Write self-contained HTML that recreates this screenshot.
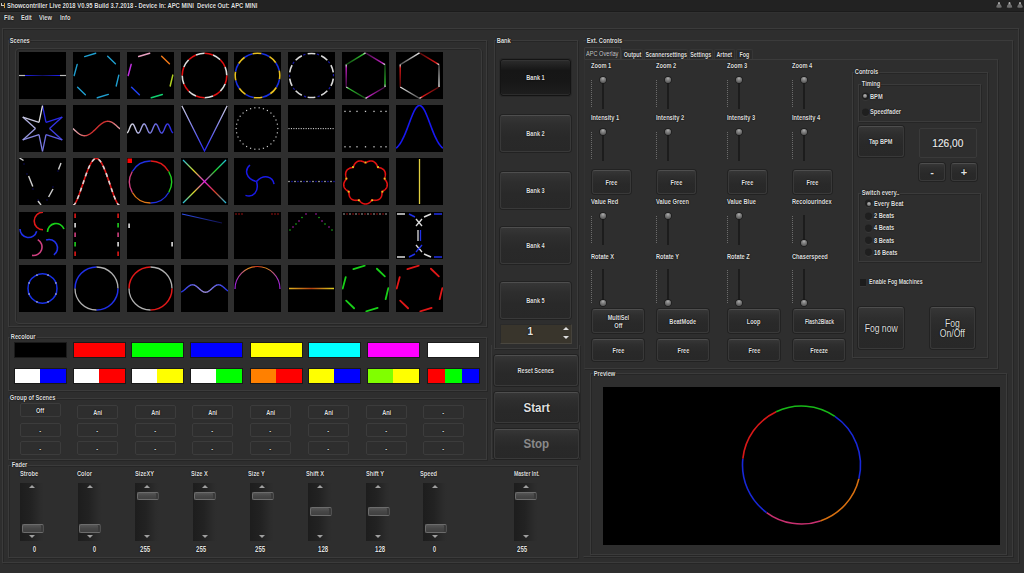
<!DOCTYPE html><html><head><meta charset="utf-8"><style>
*{margin:0;padding:0;box-sizing:border-box}
html,body{width:1024px;height:573px;overflow:hidden;background:#2e2e2e;font-family:"Liberation Sans",sans-serif;color:#e6e6e6}
.a{position:absolute}
.t{position:absolute;font-size:7.5px;font-weight:bold;line-height:8px;white-space:nowrap;color:#e0e0e0;transform:scaleX(0.76);transform-origin:0 0;text-shadow:0 0 1.5px #000,0 0 1px #000}
.bl{display:inline-block;transform:scaleX(0.8);white-space:nowrap}
.tc{position:absolute;font-size:7px;font-weight:bold;line-height:8px;white-space:nowrap;color:#e0e0e0;text-align:center;text-shadow:0 0 1.5px #000,0 0 1px #000}
.gl{background:#2e2e2e;padding:0 1px}
.grp{position:absolute;border:1px solid #3b3b3b;box-shadow:inset 1px 1px 0 #262626,1px 1px 0 #262626}
.th{position:absolute;width:47px;height:47px;background:#000}
.btn{position:absolute;border-radius:3px;background:linear-gradient(#363636,#2e2e2e 25%,#292929 60%,#282828);border:1px solid #393939;border-top-color:#4e4e4e;box-shadow:0 0 0 1px #222;padding-top:1px;font-size:7px;font-weight:bold;color:#e0e0e0;display:flex;align-items:center;justify-content:center;text-align:center;line-height:8px;text-shadow:0 0 1.5px #000,0 0 1px #000}
.gb{position:absolute;border-radius:2px;border:1px solid #3c3c3c;font-size:7px;font-weight:bold;color:#e0e0e0;display:flex;align-items:center;justify-content:center;text-shadow:0 0 1.5px #000,0 0 1px #000}
.sw{position:absolute;height:16px;border:1px solid #1a1a1a}
</style></head><body><div class="a" style="left:0px;top:0px;width:1024px;height:11px;background:#222"></div>
<div class="a" style="left:0;top:11px;width:1024px;height:1px;background:#1b1b1b"></div>
<div class="a" style="left:1px;top:3px;width:3px;height:3px;border-left:1px solid #c8c8c8;border-bottom:1px solid #c8c8c8"></div><div class="a" style="left:4px;top:2.5px;width:1px;height:5px;background:#d89a30"></div>
<svg class="a" style="left:0;top:0" width="1024" height="12"><path d="M995.8,7.2 C995.8,5 997.4,4.5 997.8,3.2 C998,1.6 1000,1.6 1000.2,3.2 C1000.6,4.5 1002.2,5 1002.2,7.2 C1002.2,8.6 995.8,8.6 995.8,7.2Z" fill="#6e6e6e" stroke="#161616" stroke-width="0.8"/><ellipse cx="999" cy="3.2" rx="0.9" ry="1.1" fill="#b0b0b0"/><path d="M1006.3,7.2 C1006.3,5 1007.9,4.5 1008.3,3.2 C1008.5,1.6 1010.5,1.6 1010.7,3.2 C1011.1,4.5 1012.7,5 1012.7,7.2 C1012.7,8.6 1006.3,8.6 1006.3,7.2Z" fill="#6e6e6e" stroke="#161616" stroke-width="0.8"/><ellipse cx="1009.5" cy="3.2" rx="0.9" ry="1.1" fill="#b0b0b0"/><path d="M1016.8,7.2 C1016.8,5 1018.4,4.5 1018.8,3.2 C1019,1.6 1021,1.6 1021.2,3.2 C1021.6,4.5 1023.2,5 1023.2,7.2 C1023.2,8.6 1016.8,8.6 1016.8,7.2Z" fill="#6e6e6e" stroke="#161616" stroke-width="0.8"/><ellipse cx="1020" cy="3.2" rx="0.9" ry="1.1" fill="#b0b0b0"/></svg>
<div class="a" style="left:0px;top:12px;width:1024px;height:16px;background:#2d2d2d;border-top:1px solid #313131"></div>
<div class="grp" style="left:2px;top:28px;width:1017px;height:535px;"></div>
<div class="grp" style="left:8px;top:40px;width:479px;height:287px;"></div>
<div class="grp" style="left:15px;top:48px;width:467px;height:276px;border-radius:4px"></div>
<svg class="th" style="left:19.0px;top:52px" width="47" height="47" viewBox="0 0 47 47"><line x1="0" y1="23.5" x2="6" y2="23.5" stroke="#bbb" stroke-width="1.2" /><line x1="41" y1="23.5" x2="47" y2="23.5" stroke="#bbb" stroke-width="1.2" /><line x1="6" y1="23.5" x2="41" y2="23.5" stroke="url(#gblue)" stroke-width="1.2"/></svg>
<svg class="th" style="left:72.9px;top:52px" width="47" height="47" viewBox="0 0 47 47"><line x1="11.68" y1="4.59" x2="22.72" y2="1.21" stroke="#1f9fd0" stroke-width="1.4" stroke-linecap="round"/><line x1="34.65" y1="4.19" x2="42.41" y2="11.68" stroke="#1f9fd0" stroke-width="1.4" stroke-linecap="round"/><line x1="45.80" y1="23.11" x2="43.19" y2="33.97" stroke="#1f9fd0" stroke-width="1.4" stroke-linecap="round"/><line x1="35.32" y1="42.41" x2="24.28" y2="45.79" stroke="#1f9fd0" stroke-width="1.4" stroke-linecap="round"/><line x1="12.35" y1="42.81" x2="4.59" y2="35.32" stroke="#1f9fd0" stroke-width="1.4" stroke-linecap="round"/><line x1="1.20" y1="23.50" x2="4.19" y2="12.35" stroke="#1f9fd0" stroke-width="1.4" stroke-linecap="round"/></svg>
<svg class="th" style="left:126.7px;top:52px" width="47" height="47" viewBox="0 0 47 47"><line x1="11.68" y1="4.59" x2="22.72" y2="1.21" stroke="#e8a0c0" stroke-width="1.5" stroke-linecap="round"/><line x1="34.65" y1="4.19" x2="42.41" y2="11.68" stroke="#f07818" stroke-width="1.5" stroke-linecap="round"/><line x1="45.80" y1="23.11" x2="43.19" y2="33.97" stroke="#b0d020" stroke-width="1.5" stroke-linecap="round"/><line x1="35.32" y1="42.41" x2="24.28" y2="45.79" stroke="#10d070" stroke-width="1.5" stroke-linecap="round"/><line x1="12.35" y1="42.81" x2="4.59" y2="35.32" stroke="#2040f0" stroke-width="1.5" stroke-linecap="round"/><line x1="1.20" y1="23.50" x2="4.19" y2="12.35" stroke="#c030e0" stroke-width="1.5" stroke-linecap="round"/></svg>
<svg class="th" style="left:180.6px;top:52px" width="47" height="47" viewBox="0 0 47 47"><path d="M23.50,1.20 A22.3,22.3 0 0 1 32.03,2.90" stroke="#e01010" stroke-width="1.6" fill="none" /><path d="M32.03,2.90 A22.3,22.3 0 0 1 39.27,7.73" stroke="#dddddd" stroke-width="1.6" fill="none" /><path d="M39.27,7.73 A22.3,22.3 0 0 1 44.10,14.97" stroke="#e01010" stroke-width="1.6" fill="none" /><path d="M44.10,14.97 A22.3,22.3 0 0 1 45.80,23.50" stroke="#dddddd" stroke-width="1.6" fill="none" /><path d="M45.80,23.50 A22.3,22.3 0 0 1 44.10,32.03" stroke="#e01010" stroke-width="1.6" fill="none" /><path d="M44.10,32.03 A22.3,22.3 0 0 1 39.27,39.27" stroke="#dddddd" stroke-width="1.6" fill="none" /><path d="M39.27,39.27 A22.3,22.3 0 0 1 32.03,44.10" stroke="#e01010" stroke-width="1.6" fill="none" /><path d="M32.03,44.10 A22.3,22.3 0 0 1 23.50,45.80" stroke="#dddddd" stroke-width="1.6" fill="none" /><path d="M23.50,45.80 A22.3,22.3 0 0 1 14.97,44.10" stroke="#e01010" stroke-width="1.6" fill="none" /><path d="M14.97,44.10 A22.3,22.3 0 0 1 7.73,39.27" stroke="#dddddd" stroke-width="1.6" fill="none" /><path d="M7.73,39.27 A22.3,22.3 0 0 1 2.90,32.03" stroke="#e01010" stroke-width="1.6" fill="none" /><path d="M2.90,32.03 A22.3,22.3 0 0 1 1.20,23.50" stroke="#dddddd" stroke-width="1.6" fill="none" /><path d="M1.20,23.50 A22.3,22.3 0 0 1 2.90,14.97" stroke="#e01010" stroke-width="1.6" fill="none" /><path d="M2.90,14.97 A22.3,22.3 0 0 1 7.73,7.73" stroke="#dddddd" stroke-width="1.6" fill="none" /><path d="M7.73,7.73 A22.3,22.3 0 0 1 14.97,2.90" stroke="#e01010" stroke-width="1.6" fill="none" /><path d="M14.97,2.90 A22.3,22.3 0 0 1 23.50,1.20" stroke="#dddddd" stroke-width="1.6" fill="none" /></svg>
<svg class="th" style="left:234.4px;top:52px" width="47" height="47" viewBox="0 0 47 47"><path d="M27.37,1.54 A22.3,22.3 0 0 1 35.48,4.69" stroke="#1830e0" stroke-width="1.6" fill="none" /><path d="M35.48,4.69 A22.3,22.3 0 0 1 41.77,10.71" stroke="#e8c020" stroke-width="1.6" fill="none" /><path d="M41.77,10.71 A22.3,22.3 0 0 1 45.27,18.67" stroke="#1830e0" stroke-width="1.6" fill="none" /><path d="M45.27,18.67 A22.3,22.3 0 0 1 45.46,27.37" stroke="#e8c020" stroke-width="1.6" fill="none" /><path d="M45.46,27.37 A22.3,22.3 0 0 1 42.31,35.48" stroke="#1830e0" stroke-width="1.6" fill="none" /><path d="M42.31,35.48 A22.3,22.3 0 0 1 36.29,41.77" stroke="#e8c020" stroke-width="1.6" fill="none" /><path d="M36.29,41.77 A22.3,22.3 0 0 1 28.33,45.27" stroke="#1830e0" stroke-width="1.6" fill="none" /><path d="M28.33,45.27 A22.3,22.3 0 0 1 19.63,45.46" stroke="#e8c020" stroke-width="1.6" fill="none" /><path d="M19.63,45.46 A22.3,22.3 0 0 1 11.52,42.31" stroke="#1830e0" stroke-width="1.6" fill="none" /><path d="M11.52,42.31 A22.3,22.3 0 0 1 5.23,36.29" stroke="#e8c020" stroke-width="1.6" fill="none" /><path d="M5.23,36.29 A22.3,22.3 0 0 1 1.73,28.33" stroke="#1830e0" stroke-width="1.6" fill="none" /><path d="M1.73,28.33 A22.3,22.3 0 0 1 1.54,19.63" stroke="#e8c020" stroke-width="1.6" fill="none" /><path d="M1.54,19.63 A22.3,22.3 0 0 1 4.69,11.52" stroke="#1830e0" stroke-width="1.6" fill="none" /><path d="M4.69,11.52 A22.3,22.3 0 0 1 10.71,5.23" stroke="#e8c020" stroke-width="1.6" fill="none" /><path d="M10.71,5.23 A22.3,22.3 0 0 1 18.67,1.73" stroke="#1830e0" stroke-width="1.6" fill="none" /><path d="M18.67,1.73 A22.3,22.3 0 0 1 27.37,1.54" stroke="#e8c020" stroke-width="1.6" fill="none" /></svg>
<svg class="th" style="left:288.3px;top:52px" width="47" height="47" viewBox="0 0 47 47"><path d="M19.68,1.83 A22,22 0 0 1 27.32,1.83" stroke="#d8d8d8" stroke-width="1.6" fill="none" /><path d="M33.14,3.73 A22,22 0 0 1 39.33,8.22" stroke="#d8d8d8" stroke-width="1.6" fill="none" /><path d="M42.92,13.17 A22,22 0 0 1 45.29,20.44" stroke="#d8d8d8" stroke-width="1.6" fill="none" /><path d="M45.29,26.56 A22,22 0 0 1 42.92,33.83" stroke="#d8d8d8" stroke-width="1.6" fill="none" /><path d="M39.33,38.78 A22,22 0 0 1 33.14,43.27" stroke="#d8d8d8" stroke-width="1.6" fill="none" /><path d="M27.32,45.17 A22,22 0 0 1 19.68,45.17" stroke="#d8d8d8" stroke-width="1.6" fill="none" /><path d="M13.86,43.27 A22,22 0 0 1 7.67,38.78" stroke="#d8d8d8" stroke-width="1.6" fill="none" /><path d="M4.08,33.83 A22,22 0 0 1 1.71,26.56" stroke="#d8d8d8" stroke-width="1.6" fill="none" /><path d="M1.71,20.44 A22,22 0 0 1 4.08,13.17" stroke="#d8d8d8" stroke-width="1.6" fill="none" /><path d="M7.67,8.22 A22,22 0 0 1 13.86,3.73" stroke="#d8d8d8" stroke-width="1.6" fill="none" /><path d="M28.82,2.15 A22,22 0 0 1 31.02,2.83" stroke="#1818a0" stroke-width="1.2" fill="none" /><path d="M40.35,9.36 A22,22 0 0 1 41.74,11.20" stroke="#1818a0" stroke-width="1.2" fill="none" /><path d="M45.45,21.97 A22,22 0 0 1 45.49,24.27" stroke="#1818a0" stroke-width="1.2" fill="none" /><path d="M42.16,35.16 A22,22 0 0 1 40.84,37.04" stroke="#1818a0" stroke-width="1.2" fill="none" /><path d="M31.74,43.90 A22,22 0 0 1 29.56,44.65" stroke="#1818a0" stroke-width="1.2" fill="none" /><path d="M18.18,44.85 A22,22 0 0 1 15.98,44.17" stroke="#1818a0" stroke-width="1.2" fill="none" /><path d="M6.65,37.64 A22,22 0 0 1 5.26,35.80" stroke="#1818a0" stroke-width="1.2" fill="none" /><path d="M1.55,25.03 A22,22 0 0 1 1.51,22.73" stroke="#1818a0" stroke-width="1.2" fill="none" /><path d="M4.84,11.84 A22,22 0 0 1 6.16,9.96" stroke="#1818a0" stroke-width="1.2" fill="none" /><path d="M15.26,3.10 A22,22 0 0 1 17.44,2.35" stroke="#1818a0" stroke-width="1.2" fill="none" /></svg>
<svg class="th" style="left:342.2px;top:52px" width="47" height="47" viewBox="0 0 47 47"><line x1="23.5" y1="0.9" x2="43" y2="12.6" stroke="url(#hxa0)" stroke-width="1.4"/><line x1="43" y1="12.6" x2="43" y2="35" stroke="url(#hxa1)" stroke-width="1.4"/><line x1="43" y1="35" x2="23.5" y2="46.3" stroke="url(#hxa2)" stroke-width="1.4"/><line x1="23.5" y1="46.3" x2="4.2" y2="35" stroke="url(#hxa3)" stroke-width="1.4"/><line x1="4.2" y1="35" x2="4.2" y2="12.6" stroke="url(#hxa4)" stroke-width="1.4"/><line x1="4.2" y1="12.6" x2="23.5" y2="0.9" stroke="url(#hxa5)" stroke-width="1.4"/></svg>
<svg class="th" style="left:396.0px;top:52px" width="47" height="47" viewBox="0 0 47 47"><line x1="23.5" y1="0.9" x2="43" y2="12.6" stroke="url(#hxb0)" stroke-width="1.4"/><line x1="43" y1="12.6" x2="43" y2="35" stroke="url(#hxb1)" stroke-width="1.4"/><line x1="43" y1="35" x2="23.5" y2="46.3" stroke="url(#hxb2)" stroke-width="1.4"/><line x1="23.5" y1="46.3" x2="4.2" y2="35" stroke="url(#hxb3)" stroke-width="1.4"/><line x1="4.2" y1="35" x2="4.2" y2="12.6" stroke="url(#hxb4)" stroke-width="1.4"/><line x1="4.2" y1="12.6" x2="23.5" y2="0.9" stroke="url(#hxb5)" stroke-width="1.4"/></svg>
<svg class="th" style="left:19.0px;top:105px" width="47" height="47" viewBox="0 0 47 47"><line x1="23.50" y1="0.70" x2="27.00" y2="17.44" stroke="#2828e8" stroke-width="1.3" /><line x1="27.00" y1="17.44" x2="43.25" y2="12.10" stroke="#2828e8" stroke-width="1.3" /><line x1="43.25" y1="12.10" x2="30.50" y2="23.50" stroke="#3434e8" stroke-width="1.3" /><line x1="30.50" y1="23.50" x2="43.25" y2="34.90" stroke="#4040e8" stroke-width="1.3" /><line x1="43.25" y1="34.90" x2="27.00" y2="29.56" stroke="#5c5ce0" stroke-width="1.3" /><line x1="27.00" y1="29.56" x2="23.50" y2="46.30" stroke="#7070e0" stroke-width="1.3" /><line x1="23.50" y1="46.30" x2="20.00" y2="29.56" stroke="#8080e0" stroke-width="1.3" /><line x1="20.00" y1="29.56" x2="3.75" y2="34.90" stroke="#8888e0" stroke-width="1.3" /><line x1="3.75" y1="34.90" x2="16.50" y2="23.50" stroke="#9898e0" stroke-width="1.3" /><line x1="16.50" y1="23.50" x2="3.75" y2="12.10" stroke="#b0b0e0" stroke-width="1.3" /><line x1="3.75" y1="12.10" x2="20.00" y2="17.44" stroke="#c8c8e0" stroke-width="1.3" /><line x1="20.00" y1="17.44" x2="23.50" y2="0.70" stroke="#e0e0e0" stroke-width="1.3" /></svg>
<svg class="th" style="left:72.9px;top:105px" width="47" height="47" viewBox="0 0 47 47"><polyline points="0.00,23.50 0.50,23.99 1.00,24.47 1.50,24.95 2.00,25.43 2.50,25.89 3.00,26.35 3.50,26.79 4.00,27.21 4.50,27.62 5.00,28.01 5.50,28.38 6.00,28.73 6.50,29.05 7.00,29.35 7.50,29.62 8.00,29.86 8.50,30.07 9.00,30.26 9.50,30.41 10.00,30.53 10.50,30.62 11.00,30.68 11.50,30.70 12.00,30.69 12.50,30.65 13.00,30.57 13.50,30.46 14.00,30.32 14.50,30.15 15.00,29.95 15.50,29.72 16.00,29.46 16.50,29.17 17.00,28.86 17.50,28.52 18.00,28.16 18.50,27.78 19.00,27.38 19.50,26.96 20.00,26.52 20.50,26.07 21.00,25.61 21.50,25.14 22.00,24.66 22.50,24.18 23.00,23.69 23.50,23.21 24.00,22.72 24.50,22.24 25.00,21.76 25.50,21.29 26.00,20.84 26.50,20.39 27.00,19.96 27.50,19.54 28.00,19.14 28.50,18.76 29.00,18.41 29.50,18.08 30.00,17.77 30.50,17.49 31.00,17.23 31.50,17.01 32.00,16.81 32.50,16.65 33.00,16.51 33.50,16.41 34.00,16.34 34.50,16.31 35.00,16.30 35.50,16.33 36.00,16.39 36.50,16.49 37.00,16.62 37.50,16.78 38.00,16.97 38.50,17.18 39.00,17.43 39.50,17.71 40.00,18.01 40.50,18.34 41.00,18.69 41.50,19.07 42.00,19.46 42.50,19.87 43.00,20.30 43.50,20.74 44.00,21.20 44.50,21.67 45.00,22.14 45.50,22.62 46.00,23.11 46.50,23.60 47.00,24.08" stroke="url(#gred)" stroke-width="1.4" fill="none"/></svg>
<svg class="th" style="left:126.7px;top:105px" width="47" height="47" viewBox="0 0 47 47"><polyline points="0.00,27.98 0.50,27.54 1.00,26.82 1.50,25.85 2.00,24.72 2.50,23.50 3.00,22.28 3.50,21.15 4.00,20.18 4.50,19.46 5.00,19.02 5.50,18.90 6.00,19.12 6.50,19.65 7.00,20.45 7.50,21.47 8.00,22.64 8.50,23.87 9.00,25.07 9.50,26.16 10.00,27.06 10.50,27.71 11.00,28.05 11.50,28.07 12.00,27.76 12.50,27.14 13.00,26.26 13.50,25.19 14.00,23.99 14.50,22.76 15.00,21.58 15.50,20.54 16.00,19.71 16.50,19.16 17.00,18.91 17.50,18.99 18.00,19.40 18.50,20.10 19.00,21.04 19.50,22.16 20.00,23.38 20.50,24.60 21.00,25.75 21.50,26.73 22.00,27.48 22.50,27.95 23.00,28.10 23.50,27.92 24.00,27.42 24.50,26.64 25.00,25.64 25.50,24.48 26.00,23.25 26.50,22.04 27.00,20.94 27.50,20.02 28.00,19.34 28.50,18.97 29.00,18.92 29.50,19.20 30.00,19.79 30.50,20.64 31.00,21.70 31.50,22.88 32.00,24.12 32.50,25.30 33.00,26.36 33.50,27.21 34.00,27.80 34.50,28.08 35.00,28.03 35.50,27.66 36.00,26.98 36.50,26.06 37.00,24.96 37.50,23.75 38.00,22.52 38.50,21.36 39.00,20.36 39.50,19.58 40.00,19.08 40.50,18.90 41.00,19.05 41.50,19.52 42.00,20.27 42.50,21.25 43.00,22.40 43.50,23.62 44.00,24.84 44.50,25.96 45.00,26.90 45.50,27.60 46.00,28.01" stroke="url(#gwb)" stroke-width="1.4" fill="none"/></svg>
<svg class="th" style="left:180.6px;top:105px" width="47" height="47" viewBox="0 0 47 47"><polyline points="0.8,0.8 23.5,46 46.2,0.8" stroke="url(#gv)" stroke-width="1.3" fill="none"/></svg>
<svg class="th" style="left:234.4px;top:105px" width="47" height="47" viewBox="0 0 47 47"><rect x="43.20" y="22.90" width="1.2" height="1.2" fill="#c4c4c4"/><rect x="42.75" y="27.22" width="1.2" height="1.2" fill="#c4c4c4"/><rect x="41.40" y="31.36" width="1.2" height="1.2" fill="#c4c4c4"/><rect x="39.23" y="35.13" width="1.2" height="1.2" fill="#c4c4c4"/><rect x="36.32" y="38.36" width="1.2" height="1.2" fill="#c4c4c4"/><rect x="32.80" y="40.91" width="1.2" height="1.2" fill="#c4c4c4"/><rect x="28.83" y="42.68" width="1.2" height="1.2" fill="#c4c4c4"/><rect x="24.57" y="43.59" width="1.2" height="1.2" fill="#c4c4c4"/><rect x="20.23" y="43.59" width="1.2" height="1.2" fill="#c4c4c4"/><rect x="15.97" y="42.68" width="1.2" height="1.2" fill="#c4c4c4"/><rect x="12.00" y="40.91" width="1.2" height="1.2" fill="#c4c4c4"/><rect x="8.48" y="38.36" width="1.2" height="1.2" fill="#c4c4c4"/><rect x="5.57" y="35.13" width="1.2" height="1.2" fill="#c4c4c4"/><rect x="3.40" y="31.36" width="1.2" height="1.2" fill="#c4c4c4"/><rect x="2.05" y="27.22" width="1.2" height="1.2" fill="#c4c4c4"/><rect x="1.60" y="22.90" width="1.2" height="1.2" fill="#c4c4c4"/><rect x="2.05" y="18.58" width="1.2" height="1.2" fill="#c4c4c4"/><rect x="3.40" y="14.44" width="1.2" height="1.2" fill="#c4c4c4"/><rect x="5.57" y="10.67" width="1.2" height="1.2" fill="#c4c4c4"/><rect x="8.48" y="7.44" width="1.2" height="1.2" fill="#c4c4c4"/><rect x="12.00" y="4.89" width="1.2" height="1.2" fill="#c4c4c4"/><rect x="15.97" y="3.12" width="1.2" height="1.2" fill="#c4c4c4"/><rect x="20.23" y="2.21" width="1.2" height="1.2" fill="#c4c4c4"/><rect x="24.57" y="2.21" width="1.2" height="1.2" fill="#c4c4c4"/><rect x="28.83" y="3.12" width="1.2" height="1.2" fill="#c4c4c4"/><rect x="32.80" y="4.89" width="1.2" height="1.2" fill="#c4c4c4"/><rect x="36.32" y="7.44" width="1.2" height="1.2" fill="#c4c4c4"/><rect x="39.23" y="10.67" width="1.2" height="1.2" fill="#c4c4c4"/><rect x="41.40" y="14.44" width="1.2" height="1.2" fill="#c4c4c4"/><rect x="42.75" y="18.58" width="1.2" height="1.2" fill="#c4c4c4"/></svg>
<svg class="th" style="left:288.3px;top:105px" width="47" height="47" viewBox="0 0 47 47"><rect x="0.45" y="23.05" width="1.1" height="1.1" fill="#d0d0d0"/><rect x="2.90" y="23.05" width="1.1" height="1.1" fill="#d0d0d0"/><rect x="5.35" y="23.05" width="1.1" height="1.1" fill="#d0d0d0"/><rect x="7.80" y="23.05" width="1.1" height="1.1" fill="#d0d0d0"/><rect x="10.25" y="23.05" width="1.1" height="1.1" fill="#d0d0d0"/><rect x="12.70" y="23.05" width="1.1" height="1.1" fill="#d0d0d0"/><rect x="15.15" y="23.05" width="1.1" height="1.1" fill="#d0d0d0"/><rect x="17.60" y="23.05" width="1.1" height="1.1" fill="#d0d0d0"/><rect x="20.05" y="23.05" width="1.1" height="1.1" fill="#d0d0d0"/><rect x="22.50" y="23.05" width="1.1" height="1.1" fill="#d0d0d0"/><rect x="24.95" y="23.05" width="1.1" height="1.1" fill="#d0d0d0"/><rect x="27.40" y="23.05" width="1.1" height="1.1" fill="#d0d0d0"/><rect x="29.85" y="23.05" width="1.1" height="1.1" fill="#d0d0d0"/><rect x="32.30" y="23.05" width="1.1" height="1.1" fill="#d0d0d0"/><rect x="34.75" y="23.05" width="1.1" height="1.1" fill="#d0d0d0"/><rect x="37.20" y="23.05" width="1.1" height="1.1" fill="#d0d0d0"/><rect x="39.65" y="23.05" width="1.1" height="1.1" fill="#d0d0d0"/><rect x="42.10" y="23.05" width="1.1" height="1.1" fill="#d0d0d0"/><rect x="44.55" y="23.05" width="1.1" height="1.1" fill="#d0d0d0"/></svg>
<svg class="th" style="left:342.2px;top:105px" width="47" height="47" viewBox="0 0 47 47"><rect x="2.35" y="5.75" width="1.3" height="1.3" fill="#d0d0d0"/><rect x="2.35" y="41.15" width="1.3" height="1.3" fill="#d0d0d0"/><rect x="7.35" y="5.75" width="1.3" height="1.3" fill="#d0d0d0"/><rect x="7.35" y="41.15" width="1.3" height="1.3" fill="#d0d0d0"/><rect x="14.35" y="5.75" width="1.3" height="1.3" fill="#d0d0d0"/><rect x="14.35" y="41.15" width="1.3" height="1.3" fill="#d0d0d0"/><rect x="22.85" y="5.75" width="1.3" height="1.3" fill="#d0d0d0"/><rect x="22.85" y="41.15" width="1.3" height="1.3" fill="#d0d0d0"/><rect x="31.35" y="5.75" width="1.3" height="1.3" fill="#d0d0d0"/><rect x="31.35" y="41.15" width="1.3" height="1.3" fill="#d0d0d0"/><rect x="38.35" y="5.75" width="1.3" height="1.3" fill="#d0d0d0"/><rect x="38.35" y="41.15" width="1.3" height="1.3" fill="#d0d0d0"/><rect x="43.35" y="5.75" width="1.3" height="1.3" fill="#d0d0d0"/><rect x="43.35" y="41.15" width="1.3" height="1.3" fill="#d0d0d0"/></svg>
<svg class="th" style="left:396.0px;top:105px" width="47" height="47" viewBox="0 0 47 47"><polyline points="0.00,43.20 0.50,42.78 1.00,42.32 1.50,41.82 2.00,41.29 2.50,40.71 3.00,40.09 3.50,39.42 4.00,38.71 4.50,37.95 5.00,37.15 5.50,36.30 6.00,35.41 6.50,34.46 7.00,33.47 7.50,32.44 8.00,31.36 8.50,30.24 9.00,29.08 9.50,27.88 10.00,26.65 10.50,25.39 11.00,24.11 11.50,22.80 12.00,21.47 12.50,20.14 13.00,18.80 13.50,17.45 14.00,16.12 14.50,14.80 15.00,13.49 15.50,12.21 16.00,10.97 16.50,9.77 17.00,8.61 17.50,7.50 18.00,6.46 18.50,5.48 19.00,4.58 19.50,3.75 20.00,3.01 20.50,2.36 21.00,1.80 21.50,1.34 22.00,0.97 22.50,0.71 23.00,0.55 23.50,0.50 24.00,0.55 24.50,0.71 25.00,0.97 25.50,1.34 26.00,1.80 26.50,2.36 27.00,3.01 27.50,3.75 28.00,4.58 28.50,5.48 29.00,6.46 29.50,7.50 30.00,8.61 30.50,9.77 31.00,10.97 31.50,12.21 32.00,13.49 32.50,14.80 33.00,16.12 33.50,17.45 34.00,18.80 34.50,20.14 35.00,21.47 35.50,22.80 36.00,24.11 36.50,25.39 37.00,26.65 37.50,27.88 38.00,29.08 38.50,30.24 39.00,31.36 39.50,32.44 40.00,33.47 40.50,34.46 41.00,35.41 41.50,36.30 42.00,37.15 42.50,37.95 43.00,38.71 43.50,39.42 44.00,40.09 44.50,40.71 45.00,41.29 45.50,41.82 46.00,42.32 46.50,42.78 47.00,43.20" stroke="#1818f0" stroke-width="1.6" fill="none"/></svg>
<svg class="th" style="left:19.0px;top:158px" width="47" height="47" viewBox="0 0 47 47"><line x1="0.5" y1="0" x2="4.5" y2="2.5" stroke="#d0d0d0" stroke-width="1.4" /><line x1="9.6" y1="18" x2="13.8" y2="28.6" stroke="#d0d0d0" stroke-width="1.4" /><line x1="19" y1="43" x2="22" y2="47" stroke="#d0d0d0" stroke-width="1.4" /><line x1="42" y1="5" x2="39.5" y2="11.5" stroke="#d0d0d0" stroke-width="1.4" /><line x1="34" y1="31" x2="29.6" y2="39" stroke="#d0d0d0" stroke-width="1.4" /><rect x="4.50" y="5.50" width="1" height="1" fill="#1010a0"/><rect x="7.50" y="15.50" width="1" height="1" fill="#1010a0"/><rect x="13.50" y="30.50" width="1" height="1" fill="#1010a0"/><rect x="18.50" y="41.50" width="1" height="1" fill="#1010a0"/><rect x="38.50" y="12.50" width="1" height="1" fill="#1010a0"/><rect x="33.50" y="28.50" width="1" height="1" fill="#1010a0"/><rect x="27.50" y="41.50" width="1" height="1" fill="#1010a0"/></svg>
<svg class="th" style="left:72.9px;top:158px" width="47" height="47" viewBox="0 0 47 47"><polyline points="0.00,47.50 0.50,47.29 1.00,46.87 1.50,46.30 2.00,45.60 2.50,44.80 3.00,43.90 3.50,42.91 4.00,41.84 4.50,40.70 5.00,39.50 5.50,38.24 6.00,36.93 6.50,35.58 7.00,34.19 7.50,32.76 8.00,31.32 8.50,29.85 9.00,28.37 9.50,26.88 10.00,25.39 10.50,23.90 11.00,22.41 11.50,20.94 12.00,19.49 12.50,18.06 13.00,16.66 13.50,15.29 14.00,13.96 14.50,12.68 15.00,11.43 15.50,10.24 16.00,9.10 16.50,8.02 17.00,7.00 17.50,6.05 18.00,5.16 18.50,4.34 19.00,3.60 19.50,2.93 20.00,2.34 20.50,1.83 21.00,1.40 21.50,1.05 22.00,0.79 22.50,0.61 23.00,0.52 23.50,0.51 24.00,0.58 24.50,0.75 25.00,0.99 25.50,1.32 26.00,1.74 26.50,2.23 27.00,2.81 27.50,3.46 28.00,4.19 28.50,4.99 29.00,5.86 29.50,6.80 30.00,7.81 30.50,8.88 31.00,10.01 31.50,11.19 32.00,12.42 32.50,13.70 33.00,15.03 33.50,16.39 34.00,17.78 34.50,19.20 35.00,20.65 35.50,22.12 36.00,23.60 36.50,25.09 37.00,26.58 37.50,28.07 38.00,29.56 38.50,31.03 39.00,32.48 39.50,33.90 40.00,35.30 40.50,36.66 41.00,37.98 41.50,39.25 42.00,40.46 42.50,41.62 43.00,42.70 43.50,43.70 44.00,44.63 44.50,45.45 45.00,46.17 45.50,46.77 46.00,47.22 46.50,47.48 47.00,47.50" stroke="#e01818" stroke-width="1.6" fill="none"/><polyline points="0.00,47.50 0.50,47.29 1.00,46.87 1.50,46.30 2.00,45.60 2.50,44.80 3.00,43.90 3.50,42.91 4.00,41.84 4.50,40.70 5.00,39.50 5.50,38.24 6.00,36.93 6.50,35.58 7.00,34.19 7.50,32.76 8.00,31.32 8.50,29.85 9.00,28.37 9.50,26.88 10.00,25.39 10.50,23.90 11.00,22.41 11.50,20.94 12.00,19.49 12.50,18.06 13.00,16.66 13.50,15.29 14.00,13.96 14.50,12.68 15.00,11.43 15.50,10.24 16.00,9.10 16.50,8.02 17.00,7.00 17.50,6.05 18.00,5.16 18.50,4.34 19.00,3.60 19.50,2.93 20.00,2.34 20.50,1.83 21.00,1.40 21.50,1.05 22.00,0.79 22.50,0.61 23.00,0.52 23.50,0.51 24.00,0.58 24.50,0.75 25.00,0.99 25.50,1.32 26.00,1.74 26.50,2.23 27.00,2.81 27.50,3.46 28.00,4.19 28.50,4.99 29.00,5.86 29.50,6.80 30.00,7.81 30.50,8.88 31.00,10.01 31.50,11.19 32.00,12.42 32.50,13.70 33.00,15.03 33.50,16.39 34.00,17.78 34.50,19.20 35.00,20.65 35.50,22.12 36.00,23.60 36.50,25.09 37.00,26.58 37.50,28.07 38.00,29.56 38.50,31.03 39.00,32.48 39.50,33.90 40.00,35.30 40.50,36.66 41.00,37.98 41.50,39.25 42.00,40.46 42.50,41.62 43.00,42.70 43.50,43.70 44.00,44.63 44.50,45.45 45.00,46.17 45.50,46.77 46.00,47.22 46.50,47.48 47.00,47.50" stroke="#d8d8d8" stroke-width="1.6" fill="none" stroke-dasharray="4 4"/></svg>
<svg class="th" style="left:126.7px;top:158px" width="47" height="47" viewBox="0 0 47 47"><rect x="0.5" y="0.5" width="4.5" height="4.5" fill="#ff0000"/><path d="M23.50,3.00 A21,21 0 0 1 41.69,13.50" stroke="#e01818" stroke-width="1.4" fill="none" /><path d="M41.69,13.50 A21,21 0 0 1 41.69,34.50" stroke="#20d020" stroke-width="1.4" fill="none" /><path d="M41.69,34.50 A21,21 0 0 1 23.50,45.00" stroke="#2030e0" stroke-width="1.4" fill="none" /><path d="M23.50,45.00 A21,21 0 0 1 5.31,34.50" stroke="#e07818" stroke-width="1.4" fill="none" /><path d="M5.31,34.50 A21,21 0 0 1 5.31,13.50" stroke="#d04080" stroke-width="1.4" fill="none" /><path d="M5.31,13.50 A21,21 0 0 1 23.50,3.00" stroke="#2030e0" stroke-width="1.4" fill="none" /></svg>
<svg class="th" style="left:180.6px;top:158px" width="47" height="47" viewBox="0 0 47 47"><line x1="2" y1="2" x2="45" y2="45" stroke="url(#grain)" stroke-width="1.3"/><line x1="45" y1="2" x2="2" y2="45" stroke="url(#grain2)" stroke-width="1.3"/></svg>
<svg class="th" style="left:234.4px;top:158px" width="47" height="47" viewBox="0 0 47 47"><g transform="translate(-1,0)"><path d="M23.5,23.5 C 13,21 11,12 17,7" transform="rotate(0 23.5 23.5)" stroke="#1a1ae8" stroke-width="1.5" fill="none"/><path d="M23.5,23.5 C 13,21 11,12 17,7" transform="rotate(120 23.5 23.5)" stroke="#1a1ae8" stroke-width="1.5" fill="none"/><path d="M23.5,23.5 C 13,21 11,12 17,7" transform="rotate(240 23.5 23.5)" stroke="#1a1ae8" stroke-width="1.5" fill="none"/></g></svg>
<svg class="th" style="left:288.3px;top:158px" width="47" height="47" viewBox="0 0 47 47"><rect x="0.35" y="22.85" width="1.3" height="1.3" fill="#d0d0d0"/><rect x="3.35" y="22.85" width="1.3" height="1.3" fill="#1818c0"/><rect x="6.35" y="22.85" width="1.3" height="1.3" fill="#d0d0d0"/><rect x="9.35" y="22.85" width="1.3" height="1.3" fill="#1818c0"/><rect x="12.35" y="22.85" width="1.3" height="1.3" fill="#d0d0d0"/><rect x="15.35" y="22.85" width="1.3" height="1.3" fill="#1818c0"/><rect x="18.35" y="22.85" width="1.3" height="1.3" fill="#d0d0d0"/><rect x="21.35" y="22.85" width="1.3" height="1.3" fill="#1818c0"/><rect x="24.35" y="22.85" width="1.3" height="1.3" fill="#d0d0d0"/><rect x="27.35" y="22.85" width="1.3" height="1.3" fill="#1818c0"/><rect x="30.35" y="22.85" width="1.3" height="1.3" fill="#d0d0d0"/><rect x="33.35" y="22.85" width="1.3" height="1.3" fill="#1818c0"/><rect x="36.35" y="22.85" width="1.3" height="1.3" fill="#d0d0d0"/><rect x="39.35" y="22.85" width="1.3" height="1.3" fill="#1818c0"/><rect x="42.35" y="22.85" width="1.3" height="1.3" fill="#d0d0d0"/><rect x="45.35" y="22.85" width="1.3" height="1.3" fill="#1818c0"/></svg>
<svg class="th" style="left:342.2px;top:158px" width="47" height="47" viewBox="0 0 47 47"><polyline points="23.50,5.00 23.84,4.77 24.18,4.54 24.53,4.33 24.89,4.12 25.26,3.93 25.63,3.75 26.01,3.59 26.39,3.44 26.78,3.31 27.17,3.20 27.56,3.11 27.95,3.04 28.35,2.99 28.74,2.97 29.13,2.97 29.52,2.99 29.91,3.04 30.29,3.11 30.66,3.21 31.02,3.33 31.38,3.47 31.73,3.64 32.06,3.83 32.39,4.04 32.70,4.27 33.00,4.52 33.29,4.79 33.56,5.08 33.82,5.39 34.06,5.71 34.29,6.04 34.50,6.39 34.70,6.75 34.89,7.12 35.06,7.50 35.21,7.88 35.36,8.27 35.49,8.66 35.61,9.05 35.71,9.45 36.12,9.48 36.53,9.53 36.94,9.59 37.34,9.67 37.75,9.75 38.15,9.86 38.54,9.97 38.93,10.11 39.31,10.26 39.68,10.42 40.04,10.61 40.38,10.81 40.72,11.03 41.03,11.26 41.33,11.51 41.62,11.78 41.88,12.06 42.13,12.36 42.35,12.67 42.55,13.00 42.73,13.34 42.89,13.69 43.03,14.05 43.14,14.42 43.23,14.80 43.30,15.18 43.34,15.58 43.37,15.97 43.37,16.37 43.35,16.78 43.31,17.18 43.25,17.58 43.17,17.99 43.07,18.39 42.96,18.79 42.84,19.18 42.70,19.57 42.54,19.95 42.38,20.33 42.21,20.70 42.50,20.99 42.78,21.29 43.05,21.60 43.32,21.92 43.57,22.24 43.81,22.58 44.04,22.92 44.25,23.28 44.45,23.63 44.62,24.00 44.78,24.37 44.91,24.75 45.03,25.13 45.12,25.51 45.19,25.90 45.23,26.28 45.25,26.67 45.25,27.06 45.22,27.44 45.17,27.82 45.09,28.20 44.98,28.57 44.86,28.93 44.70,29.29 44.53,29.63 44.33,29.97 44.12,30.30 43.88,30.62 43.62,30.93 43.35,31.22 43.06,31.51 42.75,31.78 42.43,32.04 42.10,32.28 41.76,32.51 41.41,32.74 41.05,32.94 40.69,33.14 40.32,33.33 39.95,33.50 39.99,33.91 40.01,34.32 40.02,34.73 40.02,35.14 40.00,35.56 39.97,35.97 39.93,36.38 39.86,36.78 39.78,37.18 39.68,37.58 39.56,37.96 39.42,38.34 39.27,38.70 39.09,39.06 38.89,39.39 38.68,39.72 38.45,40.03 38.20,40.32 37.93,40.60 37.64,40.85 37.34,41.09 37.02,41.31 36.69,41.50 36.34,41.68 35.99,41.83 35.62,41.97 35.24,42.08 34.85,42.17 34.46,42.24 34.06,42.29 33.66,42.32 33.25,42.33 32.84,42.33 32.43,42.30 32.01,42.26 31.61,42.20 31.20,42.13 30.79,42.05 30.39,41.96 30.00,41.85 29.76,42.19 29.52,42.52 29.26,42.84 28.99,43.16 28.71,43.46 28.43,43.76 28.13,44.04 27.82,44.31 27.50,44.56 27.17,44.80 26.83,45.02 26.48,45.22 26.13,45.40 25.77,45.55 25.40,45.69 25.02,45.80 24.65,45.89 24.27,45.95 23.88,45.99 23.50,46.00 23.12,45.99 22.73,45.95 22.35,45.89 21.98,45.80 21.60,45.69 21.23,45.55 20.87,45.40 20.52,45.22 20.17,45.02 19.83,44.80 19.50,44.56 19.18,44.31 18.87,44.04 18.57,43.76 18.29,43.46 18.01,43.16 17.74,42.84 17.48,42.52 17.24,42.19 17.00,41.85 16.61,41.96 16.21,42.05 15.80,42.13 15.39,42.20 14.99,42.26 14.57,42.30 14.16,42.33 13.75,42.33 13.34,42.32 12.94,42.29 12.54,42.24 12.15,42.17 11.76,42.08 11.38,41.97 11.01,41.83 10.66,41.68 10.31,41.50 9.98,41.31 9.66,41.09 9.36,40.85 9.07,40.60 8.80,40.32 8.55,40.03 8.32,39.72 8.11,39.39 7.91,39.06 7.73,38.70 7.58,38.34 7.44,37.96 7.32,37.58 7.22,37.18 7.14,36.78 7.07,36.38 7.03,35.97 7.00,35.56 6.98,35.14 6.98,34.73 6.99,34.32 7.01,33.91 7.05,33.50 6.68,33.33 6.31,33.14 5.95,32.94 5.59,32.74 5.24,32.51 4.90,32.28 4.57,32.04 4.25,31.78 3.94,31.51 3.65,31.22 3.38,30.93 3.12,30.62 2.88,30.30 2.67,29.97 2.47,29.63 2.30,29.29 2.14,28.93 2.02,28.57 1.91,28.20 1.83,27.82 1.78,27.44 1.75,27.06 1.75,26.67 1.77,26.28 1.81,25.90 1.88,25.51 1.97,25.13 2.09,24.75 2.22,24.37 2.38,24.00 2.55,23.63 2.75,23.28 2.96,22.92 3.19,22.58 3.43,22.24 3.68,21.92 3.95,21.60 4.22,21.29 4.50,20.99 4.79,20.70 4.62,20.33 4.46,19.95 4.30,19.57 4.16,19.18 4.04,18.79 3.93,18.39 3.83,17.99 3.75,17.58 3.69,17.18 3.65,16.78 3.63,16.37 3.63,15.97 3.66,15.58 3.70,15.18 3.77,14.80 3.86,14.42 3.97,14.05 4.11,13.69 4.27,13.34 4.45,13.00 4.65,12.67 4.87,12.36 5.12,12.06 5.38,11.78 5.67,11.51 5.97,11.26 6.28,11.03 6.62,10.81 6.96,10.61 7.32,10.42 7.69,10.26 8.07,10.11 8.46,9.97 8.85,9.86 9.25,9.75 9.66,9.67 10.06,9.59 10.47,9.53 10.88,9.48 11.29,9.45 11.39,9.05 11.51,8.66 11.64,8.27 11.79,7.88 11.94,7.50 12.11,7.12 12.30,6.75 12.50,6.39 12.71,6.04 12.94,5.71 13.18,5.39 13.44,5.08 13.71,4.79 14.00,4.52 14.30,4.27 14.61,4.04 14.94,3.83 15.27,3.64 15.62,3.47 15.98,3.33 16.34,3.21 16.71,3.11 17.09,3.04 17.48,2.99 17.87,2.97 18.26,2.97 18.65,2.99 19.05,3.04 19.44,3.11 19.83,3.20 20.22,3.31 20.61,3.44 20.99,3.59 21.37,3.75 21.74,3.93 22.11,4.12 22.47,4.33 22.82,4.54 23.16,4.77 23.50,5.00" stroke="#e01010" stroke-width="1.6" fill="none"/><rect x="22.60" y="3.60" width="1.8" height="1.8" fill="#e0d020"/><rect x="35.13" y="8.16" width="1.8" height="1.8" fill="#e0d020"/><rect x="41.80" y="19.71" width="1.8" height="1.8" fill="#e0d020"/><rect x="39.49" y="32.85" width="1.8" height="1.8" fill="#e0d020"/><rect x="29.27" y="41.42" width="1.8" height="1.8" fill="#e0d020"/><rect x="15.93" y="41.42" width="1.8" height="1.8" fill="#e0d020"/><rect x="5.71" y="32.85" width="1.8" height="1.8" fill="#e0d020"/><rect x="3.40" y="19.71" width="1.8" height="1.8" fill="#e0d020"/><rect x="10.07" y="8.16" width="1.8" height="1.8" fill="#e0d020"/></svg>
<svg class="th" style="left:396.0px;top:158px" width="47" height="47" viewBox="0 0 47 47"><line x1="23.5" y1="1" x2="23.5" y2="46" stroke="#e0d040" stroke-width="1.3" /></svg>
<svg class="th" style="left:19.0px;top:212px" width="47" height="47" viewBox="0 0 47 47"><path d="M24.00,17.80 A8.8,8.8 0 0 1 24.00,0.20" stroke="#e01818" stroke-width="1.6" fill="none" /><path d="M28.50,20.00 A8.5,8.5 0 0 1 44.99,17.09" stroke="#18d018" stroke-width="1.6" fill="none" /><path d="M17.71,19.20 A8.5,8.5 0 0 1 1.00,17.00" stroke="#2030e8" stroke-width="1.6" fill="none" /><path d="M18.75,27.64 A8.5,8.5 0 0 1 13.02,43.37" stroke="#d04080" stroke-width="1.6" fill="none" /><path d="M27.09,28.01 A8.5,8.5 0 0 1 34.88,42.96" stroke="#2030e8" stroke-width="1.6" fill="none" /></svg>
<svg class="th" style="left:72.9px;top:212px" width="47" height="47" viewBox="0 0 47 47"><rect x="1.3" y="1.5" width="1.6" height="4.5" fill="#e01818"/><rect x="1.3" y="11" width="1.6" height="4.5" fill="#dddddd"/><rect x="1.3" y="20.5" width="1.6" height="4.5" fill="#d04080"/><rect x="1.3" y="30" width="1.6" height="4.5" fill="#20d020"/><rect x="1.3" y="39.5" width="1.6" height="4.5" fill="#e01818"/><rect x="44.3" y="1.5" width="1.6" height="4.5" fill="#e01818"/><rect x="44.3" y="11" width="1.6" height="4.5" fill="#20d020"/><rect x="44.3" y="20.5" width="1.6" height="4.5" fill="#d04080"/><rect x="44.3" y="30" width="1.6" height="4.5" fill="#dddddd"/><rect x="44.3" y="39.5" width="1.6" height="4.5" fill="#e01818"/></svg>
<svg class="th" style="left:126.7px;top:212px" width="47" height="47" viewBox="0 0 47 47"><rect x="1.3" y="11.5" width="1.6" height="4.5" fill="#dddddd"/><rect x="44.3" y="30" width="1.6" height="4.5" fill="#dddddd"/></svg>
<svg class="th" style="left:180.6px;top:212px" width="47" height="47" viewBox="0 0 47 47"><line x1="1" y1="2" x2="41" y2="11" stroke="url(#gbl)" stroke-width="1.2"/></svg>
<svg class="th" style="left:234.4px;top:212px" width="47" height="47" viewBox="0 0 47 47"><rect x="1.40" y="1.40" width="1.2" height="1.2" fill="#d01818"/><rect x="4.40" y="1.40" width="1.2" height="1.2" fill="#d01818"/><rect x="7.40" y="1.40" width="1.2" height="1.2" fill="#d01818"/><rect x="37.40" y="1.40" width="1.2" height="1.2" fill="#d01818"/><rect x="40.40" y="1.40" width="1.2" height="1.2" fill="#d01818"/><rect x="43.40" y="1.40" width="1.2" height="1.2" fill="#d01818"/></svg>
<svg class="th" style="left:288.3px;top:212px" width="47" height="47" viewBox="0 0 47 47"><rect x="1.35" y="17.35" width="1.3" height="1.3" fill="#20c020"/><rect x="4.35" y="14.35" width="1.3" height="1.3" fill="#c020c0"/><rect x="7.35" y="11.35" width="1.3" height="1.3" fill="#20c020"/><rect x="10.35" y="8.35" width="1.3" height="1.3" fill="#c020c0"/><rect x="13.35" y="4.85" width="1.3" height="1.3" fill="#20c020"/><rect x="17.35" y="1.35" width="1.3" height="1.3" fill="#c020c0"/><rect x="27.35" y="1.35" width="1.3" height="1.3" fill="#c020c0"/><rect x="30.35" y="4.85" width="1.3" height="1.3" fill="#20c020"/><rect x="33.35" y="8.35" width="1.3" height="1.3" fill="#c020c0"/><rect x="36.35" y="11.35" width="1.3" height="1.3" fill="#20c020"/><rect x="40.35" y="14.35" width="1.3" height="1.3" fill="#c020c0"/><rect x="43.35" y="17.35" width="1.3" height="1.3" fill="#20c020"/></svg>
<svg class="th" style="left:342.2px;top:212px" width="47" height="47" viewBox="0 0 47 47"><rect x="1.40" y="1.40" width="1.2" height="1.2" fill="#d8d8d8"/><rect x="4.40" y="1.40" width="1.2" height="1.2" fill="#d01818"/><rect x="7.40" y="1.40" width="1.2" height="1.2" fill="#d8d8d8"/><rect x="10.40" y="1.40" width="1.2" height="1.2" fill="#d01818"/><rect x="13.40" y="1.40" width="1.2" height="1.2" fill="#d8d8d8"/><rect x="16.40" y="1.40" width="1.2" height="1.2" fill="#d01818"/><rect x="19.40" y="1.40" width="1.2" height="1.2" fill="#d8d8d8"/><rect x="22.40" y="1.40" width="1.2" height="1.2" fill="#d01818"/><rect x="25.40" y="1.40" width="1.2" height="1.2" fill="#d8d8d8"/><rect x="28.40" y="1.40" width="1.2" height="1.2" fill="#d01818"/><rect x="31.40" y="1.40" width="1.2" height="1.2" fill="#d8d8d8"/><rect x="34.40" y="1.40" width="1.2" height="1.2" fill="#d01818"/><rect x="37.40" y="1.40" width="1.2" height="1.2" fill="#d8d8d8"/><rect x="40.40" y="1.40" width="1.2" height="1.2" fill="#d01818"/><rect x="43.40" y="1.40" width="1.2" height="1.2" fill="#d8d8d8"/></svg>
<svg class="th" style="left:396.0px;top:212px" width="47" height="47" viewBox="0 0 47 47"><line x1="1" y1="2" x2="9" y2="2" stroke="#dddddd" stroke-width="1.5" /><line x1="38" y1="2" x2="46" y2="2" stroke="#2030e8" stroke-width="1.5" /><line x1="13" y1="2" x2="19" y2="5" stroke="#2030e8" stroke-width="1.5" /><line x1="35" y1="2" x2="28" y2="5" stroke="#dddddd" stroke-width="1.5" /><line x1="20" y1="7" x2="26" y2="14" stroke="#dddddd" stroke-width="1.3" /><line x1="26" y1="7" x2="20" y2="14" stroke="#dddddd" stroke-width="1.3" /><line x1="22" y1="18" x2="22" y2="29" stroke="#dddddd" stroke-width="1.3" /><line x1="24.5" y1="18" x2="24.5" y2="29" stroke="#2030e8" stroke-width="1.3" /><line x1="20" y1="33" x2="26" y2="40" stroke="#dddddd" stroke-width="1.3" /><line x1="26" y1="33" x2="20" y2="40" stroke="#2030e8" stroke-width="1.3" /><line x1="1" y1="45" x2="9" y2="45" stroke="#dddddd" stroke-width="1.5" /><line x1="38" y1="45" x2="46" y2="45" stroke="#2030e8" stroke-width="1.5" /><line x1="13" y1="45" x2="19" y2="42" stroke="#2030e8" stroke-width="1.5" /><line x1="35" y1="45" x2="28" y2="42" stroke="#dddddd" stroke-width="1.5" /></svg>
<svg class="th" style="left:19.0px;top:265px" width="47" height="47" viewBox="0 0 47 47"><path d="M38.00,23.50 A14.5,14.5 0 1 1 38.00,23.47" stroke="#1830e8" stroke-width="1.5" fill="none" /><rect x="36.20" y="28.35" width="1.4" height="1.4" fill="#c0c0c0"/><rect x="28.35" y="36.20" width="1.4" height="1.4" fill="#c0c0c0"/><rect x="17.25" y="36.20" width="1.4" height="1.4" fill="#c0c0c0"/><rect x="9.40" y="28.35" width="1.4" height="1.4" fill="#c0c0c0"/><rect x="9.40" y="17.25" width="1.4" height="1.4" fill="#c0c0c0"/><rect x="17.25" y="9.40" width="1.4" height="1.4" fill="#c0c0c0"/><rect x="28.35" y="9.40" width="1.4" height="1.4" fill="#c0c0c0"/><rect x="36.20" y="17.25" width="1.4" height="1.4" fill="#c0c0c0"/></svg>
<svg class="th" style="left:72.9px;top:265px" width="47" height="47" viewBox="0 0 47 47"><path d="M2.00,23.50 A21.5,21.5 0 0 1 23.50,2.00" stroke="#2030e8" stroke-width="1.5" fill="none" /><path d="M23.50,2.00 A21.5,21.5 0 0 1 45.00,23.50" stroke="#b0b0b0" stroke-width="1.3" fill="none" /><path d="M45.00,23.50 A21.5,21.5 0 0 1 23.50,45.00" stroke="#2030e8" stroke-width="1.5" fill="none" /><path d="M23.50,45.00 A21.5,21.5 0 0 1 2.00,23.50" stroke="#b0b0b0" stroke-width="1.3" fill="none" /></svg>
<svg class="th" style="left:126.7px;top:265px" width="47" height="47" viewBox="0 0 47 47"><path d="M2.00,23.50 A21.5,21.5 0 0 1 23.50,2.00" stroke="#e01818" stroke-width="1.5" fill="none" /><path d="M23.50,2.00 A21.5,21.5 0 0 1 45.00,23.50" stroke="#b0b0b0" stroke-width="1.3" fill="none" /><path d="M45.00,23.50 A21.5,21.5 0 0 1 23.50,45.00" stroke="#e01818" stroke-width="1.5" fill="none" /><path d="M23.50,45.00 A21.5,21.5 0 0 1 2.00,23.50" stroke="#b0b0b0" stroke-width="1.3" fill="none" /></svg>
<svg class="th" style="left:180.6px;top:265px" width="47" height="47" viewBox="0 0 47 47"><polyline points="0.00,26.96 0.50,26.78 1.00,26.55 1.50,26.27 2.00,25.95 2.50,25.60 3.00,25.22 3.50,24.81 4.00,24.39 4.50,23.95 5.00,23.50 5.50,23.05 6.00,22.61 6.50,22.19 7.00,21.78 7.50,21.40 8.00,21.05 8.50,20.73 9.00,20.45 9.50,20.22 10.00,20.04 10.50,19.91 11.00,19.83 11.50,19.80 12.00,19.83 12.50,19.91 13.00,20.04 13.50,20.22 14.00,20.45 14.50,20.73 15.00,21.05 15.50,21.40 16.00,21.78 16.50,22.19 17.00,22.61 17.50,23.05 18.00,23.50 18.50,23.95 19.00,24.39 19.50,24.81 20.00,25.22 20.50,25.60 21.00,25.95 21.50,26.27 22.00,26.55 22.50,26.78 23.00,26.96 23.50,27.09 24.00,27.17 24.50,27.20 25.00,27.17 25.50,27.09 26.00,26.96 26.50,26.78 27.00,26.55 27.50,26.27 28.00,25.95 28.50,25.60 29.00,25.22 29.50,24.81 30.00,24.39 30.50,23.95 31.00,23.50 31.50,23.05 32.00,22.61 32.50,22.19 33.00,21.78 33.50,21.40 34.00,21.05 34.50,20.73 35.00,20.45 35.50,20.22 36.00,20.04 36.50,19.91 37.00,19.83 37.50,19.80 38.00,19.83 38.50,19.91 39.00,20.04 39.50,20.22 40.00,20.45 40.50,20.73 41.00,21.05 41.50,21.40 42.00,21.78 42.50,22.19 43.00,22.61 43.50,23.05 44.00,23.50 44.50,23.95 45.00,24.39 45.50,24.81 46.00,25.22 46.50,25.60 47.00,25.95" stroke="url(#gwv)" stroke-width="1.4" fill="none"/></svg>
<svg class="th" style="left:234.4px;top:265px" width="47" height="47" viewBox="0 0 47 47"><path d="M1.00,24.00 A22.5,22.5 0 0 1 46.00,24.00" stroke="url(#gsemi)" stroke-width="1.2" fill="none"/></svg>
<svg class="th" style="left:288.3px;top:265px" width="47" height="47" viewBox="0 0 47 47"><line x1="1" y1="23.5" x2="46" y2="23.5" stroke="url(#gyl)" stroke-width="1.3"/></svg>
<svg class="th" style="left:342.2px;top:265px" width="47" height="47" viewBox="0 0 47 47"><line x1="11.42" y1="4.16" x2="22.70" y2="0.71" stroke="#18d018" stroke-width="1.8" stroke-linecap="round"/><line x1="34.90" y1="3.75" x2="42.84" y2="11.42" stroke="#18d018" stroke-width="1.8" stroke-linecap="round"/><line x1="46.30" y1="23.10" x2="43.63" y2="34.20" stroke="#18d018" stroke-width="1.8" stroke-linecap="round"/><line x1="35.58" y1="42.84" x2="24.30" y2="46.29" stroke="#18d018" stroke-width="1.8" stroke-linecap="round"/><line x1="12.10" y1="43.25" x2="4.16" y2="35.58" stroke="#18d018" stroke-width="1.8" stroke-linecap="round"/><line x1="0.70" y1="23.50" x2="3.75" y2="12.10" stroke="#18d018" stroke-width="1.8" stroke-linecap="round"/></svg>
<svg class="th" style="left:396.0px;top:265px" width="47" height="47" viewBox="0 0 47 47"><line x1="11.42" y1="4.16" x2="22.70" y2="0.71" stroke="#e01818" stroke-width="1.8" stroke-linecap="round"/><line x1="34.90" y1="3.75" x2="42.84" y2="11.42" stroke="#e01818" stroke-width="1.8" stroke-linecap="round"/><line x1="46.30" y1="23.10" x2="43.63" y2="34.20" stroke="#e01818" stroke-width="1.8" stroke-linecap="round"/><line x1="35.58" y1="42.84" x2="24.30" y2="46.29" stroke="#e01818" stroke-width="1.8" stroke-linecap="round"/><line x1="12.10" y1="43.25" x2="4.16" y2="35.58" stroke="#e01818" stroke-width="1.8" stroke-linecap="round"/><line x1="0.70" y1="23.50" x2="3.75" y2="12.10" stroke="#e01818" stroke-width="1.8" stroke-linecap="round"/></svg>
<div class="grp" style="left:8px;top:337px;width:479px;height:54px;"></div>
<div class="sw" style="left:14px;top:342px;width:53px;background:#000"></div>
<div class="sw" style="left:73px;top:342px;width:53px;background:#ff0000"></div>
<div class="sw" style="left:131px;top:342px;width:53px;background:#00ff00"></div>
<div class="sw" style="left:190px;top:342px;width:53px;background:#0000ff"></div>
<div class="sw" style="left:250px;top:342px;width:53px;background:#ffff00"></div>
<div class="sw" style="left:308px;top:342px;width:53px;background:#00ffff"></div>
<div class="sw" style="left:367px;top:342px;width:53px;background:#ff00ff"></div>
<div class="sw" style="left:427px;top:342px;width:53px;background:#ffffff"></div>
<div class="sw" style="left:14px;top:368px;width:53px;background:linear-gradient(90deg,#fff 0.0%,#fff 50.0%,#0000ff 50.0%,#0000ff 100.0%)"></div>
<div class="sw" style="left:73px;top:368px;width:53px;background:linear-gradient(90deg,#fff 0.0%,#fff 50.0%,#ff0000 50.0%,#ff0000 100.0%)"></div>
<div class="sw" style="left:131px;top:368px;width:53px;background:linear-gradient(90deg,#fff 0.0%,#fff 50.0%,#ffff00 50.0%,#ffff00 100.0%)"></div>
<div class="sw" style="left:190px;top:368px;width:53px;background:linear-gradient(90deg,#fff 0.0%,#fff 50.0%,#00ff00 50.0%,#00ff00 100.0%)"></div>
<div class="sw" style="left:250px;top:368px;width:53px;background:linear-gradient(90deg,#ff8000 0.0%,#ff8000 50.0%,#ff0000 50.0%,#ff0000 100.0%)"></div>
<div class="sw" style="left:308px;top:368px;width:53px;background:linear-gradient(90deg,#ffff00 0.0%,#ffff00 50.0%,#0000ff 50.0%,#0000ff 100.0%)"></div>
<div class="sw" style="left:367px;top:368px;width:53px;background:linear-gradient(90deg,#80ff00 0.0%,#80ff00 50.0%,#ffff00 50.0%,#ffff00 100.0%)"></div>
<div class="sw" style="left:427px;top:368px;width:53px;background:linear-gradient(90deg,#ff0000 0.0%,#ff0000 33.3%,#00ff00 33.3%,#00ff00 66.7%,#0000ff 66.7%,#0000ff 100.0%)"></div>
<div class="grp" style="left:8px;top:398px;width:479px;height:62px;"></div>
<div class="gb" style="left:20px;top:403px;width:41px;height:14px;font-weight:bold"><span class="bl">Off</span></div>
<div class="gb" style="left:20px;top:423px;width:41px;height:14px;"><span class="bl">-</span></div>
<div class="gb" style="left:20px;top:441px;width:41px;height:14px;"><span class="bl">-</span></div>
<div class="gb" style="left:77px;top:405px;width:41px;height:14px;font-weight:bold"><span class="bl">Ani</span></div>
<div class="gb" style="left:77px;top:423px;width:41px;height:14px;"><span class="bl">-</span></div>
<div class="gb" style="left:77px;top:441px;width:41px;height:14px;"><span class="bl">-</span></div>
<div class="gb" style="left:135px;top:405px;width:41px;height:14px;font-weight:bold"><span class="bl">Ani</span></div>
<div class="gb" style="left:135px;top:423px;width:41px;height:14px;"><span class="bl">-</span></div>
<div class="gb" style="left:135px;top:441px;width:41px;height:14px;"><span class="bl">-</span></div>
<div class="gb" style="left:192px;top:405px;width:41px;height:14px;font-weight:bold"><span class="bl">Ani</span></div>
<div class="gb" style="left:192px;top:423px;width:41px;height:14px;"><span class="bl">-</span></div>
<div class="gb" style="left:192px;top:441px;width:41px;height:14px;"><span class="bl">-</span></div>
<div class="gb" style="left:250px;top:405px;width:41px;height:14px;font-weight:bold"><span class="bl">Ani</span></div>
<div class="gb" style="left:250px;top:423px;width:41px;height:14px;"><span class="bl">-</span></div>
<div class="gb" style="left:250px;top:441px;width:41px;height:14px;"><span class="bl">-</span></div>
<div class="gb" style="left:308px;top:405px;width:41px;height:14px;font-weight:bold"><span class="bl">Ani</span></div>
<div class="gb" style="left:308px;top:423px;width:41px;height:14px;"><span class="bl">-</span></div>
<div class="gb" style="left:308px;top:441px;width:41px;height:14px;"><span class="bl">-</span></div>
<div class="gb" style="left:366px;top:405px;width:41px;height:14px;font-weight:bold"><span class="bl">Ani</span></div>
<div class="gb" style="left:366px;top:423px;width:41px;height:14px;"><span class="bl">-</span></div>
<div class="gb" style="left:366px;top:441px;width:41px;height:14px;"><span class="bl">-</span></div>
<div class="gb" style="left:423px;top:405px;width:41px;height:14px;"><span class="bl">-</span></div>
<div class="gb" style="left:423px;top:423px;width:41px;height:14px;"><span class="bl">-</span></div>
<div class="gb" style="left:423px;top:441px;width:41px;height:14px;"><span class="bl">-</span></div>
<div class="grp" style="left:8px;top:465px;width:570px;height:93px;"></div>
<div class="a" style="left:20px;top:482.5px;width:24px;height:58.5px;background:linear-gradient(90deg,#1d1d1d,#222 45%,#2c2c2c 85%,#2e2e2e)"></div>
<div class="a" style="left:29px;top:485px;width:0;height:0;border-left:3px solid transparent;border-right:3px solid transparent;border-bottom:3px solid #a0a0a0"></div>
<div class="a" style="left:29px;top:535px;width:0;height:0;border-left:3px solid transparent;border-right:3px solid transparent;border-top:3px solid #a0a0a0"></div>
<div class="a" style="left:21.5px;top:524px;width:22px;height:8.5px;border-radius:2px;border:1px solid #6c6c6c;border-right-color:#505050;background:linear-gradient(#565656,#474747 50%,#404040);box-shadow:inset -2px 0 0 #3a3a3a"></div>
<div class="a" style="left:77.7px;top:482.5px;width:24px;height:58.5px;background:linear-gradient(90deg,#1d1d1d,#222 45%,#2c2c2c 85%,#2e2e2e)"></div>
<div class="a" style="left:86.7px;top:485px;width:0;height:0;border-left:3px solid transparent;border-right:3px solid transparent;border-bottom:3px solid #a0a0a0"></div>
<div class="a" style="left:86.7px;top:535px;width:0;height:0;border-left:3px solid transparent;border-right:3px solid transparent;border-top:3px solid #a0a0a0"></div>
<div class="a" style="left:79.2px;top:524px;width:22px;height:8.5px;border-radius:2px;border:1px solid #6c6c6c;border-right-color:#505050;background:linear-gradient(#565656,#474747 50%,#404040);box-shadow:inset -2px 0 0 #3a3a3a"></div>
<div class="a" style="left:135.4px;top:482.5px;width:24px;height:58.5px;background:linear-gradient(90deg,#1d1d1d,#222 45%,#2c2c2c 85%,#2e2e2e)"></div>
<div class="a" style="left:144.4px;top:485px;width:0;height:0;border-left:3px solid transparent;border-right:3px solid transparent;border-bottom:3px solid #a0a0a0"></div>
<div class="a" style="left:144.4px;top:535px;width:0;height:0;border-left:3px solid transparent;border-right:3px solid transparent;border-top:3px solid #a0a0a0"></div>
<div class="a" style="left:136.9px;top:491.5px;width:22px;height:8.5px;border-radius:2px;border:1px solid #6c6c6c;border-right-color:#505050;background:linear-gradient(#565656,#474747 50%,#404040);box-shadow:inset -2px 0 0 #3a3a3a"></div>
<div class="a" style="left:192.6px;top:482.5px;width:24px;height:58.5px;background:linear-gradient(90deg,#1d1d1d,#222 45%,#2c2c2c 85%,#2e2e2e)"></div>
<div class="a" style="left:201.6px;top:485px;width:0;height:0;border-left:3px solid transparent;border-right:3px solid transparent;border-bottom:3px solid #a0a0a0"></div>
<div class="a" style="left:201.6px;top:535px;width:0;height:0;border-left:3px solid transparent;border-right:3px solid transparent;border-top:3px solid #a0a0a0"></div>
<div class="a" style="left:194.1px;top:491.5px;width:22px;height:8.5px;border-radius:2px;border:1px solid #6c6c6c;border-right-color:#505050;background:linear-gradient(#565656,#474747 50%,#404040);box-shadow:inset -2px 0 0 #3a3a3a"></div>
<div class="a" style="left:250.2px;top:482.5px;width:24px;height:58.5px;background:linear-gradient(90deg,#1d1d1d,#222 45%,#2c2c2c 85%,#2e2e2e)"></div>
<div class="a" style="left:259.2px;top:485px;width:0;height:0;border-left:3px solid transparent;border-right:3px solid transparent;border-bottom:3px solid #a0a0a0"></div>
<div class="a" style="left:259.2px;top:535px;width:0;height:0;border-left:3px solid transparent;border-right:3px solid transparent;border-top:3px solid #a0a0a0"></div>
<div class="a" style="left:251.7px;top:491.5px;width:22px;height:8.5px;border-radius:2px;border:1px solid #6c6c6c;border-right-color:#505050;background:linear-gradient(#565656,#474747 50%,#404040);box-shadow:inset -2px 0 0 #3a3a3a"></div>
<div class="a" style="left:308.2px;top:482.5px;width:24px;height:58.5px;background:linear-gradient(90deg,#1d1d1d,#222 45%,#2c2c2c 85%,#2e2e2e)"></div>
<div class="a" style="left:317.2px;top:485px;width:0;height:0;border-left:3px solid transparent;border-right:3px solid transparent;border-bottom:3px solid #a0a0a0"></div>
<div class="a" style="left:317.2px;top:535px;width:0;height:0;border-left:3px solid transparent;border-right:3px solid transparent;border-top:3px solid #a0a0a0"></div>
<div class="a" style="left:309.7px;top:507px;width:22px;height:8.5px;border-radius:2px;border:1px solid #6c6c6c;border-right-color:#505050;background:linear-gradient(#565656,#474747 50%,#404040);box-shadow:inset -2px 0 0 #3a3a3a"></div>
<div class="a" style="left:366px;top:482.5px;width:24px;height:58.5px;background:linear-gradient(90deg,#1d1d1d,#222 45%,#2c2c2c 85%,#2e2e2e)"></div>
<div class="a" style="left:375px;top:485px;width:0;height:0;border-left:3px solid transparent;border-right:3px solid transparent;border-bottom:3px solid #a0a0a0"></div>
<div class="a" style="left:375px;top:535px;width:0;height:0;border-left:3px solid transparent;border-right:3px solid transparent;border-top:3px solid #a0a0a0"></div>
<div class="a" style="left:367.5px;top:507px;width:22px;height:8.5px;border-radius:2px;border:1px solid #6c6c6c;border-right-color:#505050;background:linear-gradient(#565656,#474747 50%,#404040);box-shadow:inset -2px 0 0 #3a3a3a"></div>
<div class="a" style="left:423px;top:482.5px;width:24px;height:58.5px;background:linear-gradient(90deg,#1d1d1d,#222 45%,#2c2c2c 85%,#2e2e2e)"></div>
<div class="a" style="left:432px;top:485px;width:0;height:0;border-left:3px solid transparent;border-right:3px solid transparent;border-bottom:3px solid #a0a0a0"></div>
<div class="a" style="left:432px;top:535px;width:0;height:0;border-left:3px solid transparent;border-right:3px solid transparent;border-top:3px solid #a0a0a0"></div>
<div class="a" style="left:424.5px;top:524px;width:22px;height:8.5px;border-radius:2px;border:1px solid #6c6c6c;border-right-color:#505050;background:linear-gradient(#565656,#474747 50%,#404040);box-shadow:inset -2px 0 0 #3a3a3a"></div>
<div class="a" style="left:513.7px;top:482.5px;width:24px;height:58.5px;background:linear-gradient(90deg,#1d1d1d,#222 45%,#2c2c2c 85%,#2e2e2e)"></div>
<div class="a" style="left:522.7px;top:485px;width:0;height:0;border-left:3px solid transparent;border-right:3px solid transparent;border-bottom:3px solid #a0a0a0"></div>
<div class="a" style="left:522.7px;top:535px;width:0;height:0;border-left:3px solid transparent;border-right:3px solid transparent;border-top:3px solid #a0a0a0"></div>
<div class="a" style="left:515.2px;top:491.5px;width:22px;height:8.5px;border-radius:2px;border:1px solid #6c6c6c;border-right-color:#505050;background:linear-gradient(#565656,#474747 50%,#404040);box-shadow:inset -2px 0 0 #3a3a3a"></div>
<div class="grp" style="left:494px;top:40px;width:84px;height:309px;"></div>
<div class="btn" style="left:500px;top:59px;width:71px;height:37px;padding-top:1.5px;background:linear-gradient(#2c2c2c,#161616 30%,#171717 60%,#1e1e1e);border-color:#141414;box-shadow:inset 0 1px 0 #333,inset 0 -1px 0 #2c2c2c,0 0 0 1px #282828;"><span class="bl">Bank 1</span></div>
<div class="btn" style="left:500px;top:115px;width:71px;height:37px;padding-top:1.5px;"><span class="bl">Bank 2</span></div>
<div class="btn" style="left:500px;top:172px;width:71px;height:37px;padding-top:1.5px;"><span class="bl">Bank 3</span></div>
<div class="btn" style="left:500px;top:227px;width:71px;height:37px;padding-top:1.5px;"><span class="bl">Bank 4</span></div>
<div class="btn" style="left:500px;top:282px;width:71px;height:37px;padding-top:1.5px;"><span class="bl">Bank 5</span></div>
<div class="a" style="left:500px;top:323.5px;width:71.5px;height:20.5px;background:#39352c;border:1px solid #2a2a2a;border-bottom-color:#4a4740;border-right-color:#45423b"></div>
<div class="a" style="left:563px;top:327px;width:0;height:0;border-left:3px solid transparent;border-right:3px solid transparent;border-bottom:3px solid #ddd"></div>
<div class="a" style="left:563px;top:336px;width:0;height:0;border-left:3px solid transparent;border-right:3px solid transparent;border-top:3px solid #ddd"></div>
<div class="grp" style="left:491px;top:345px;width:89px;height:114px;border-top:none;box-shadow:1px 1px 0 #262626"></div>
<div class="btn" style="left:494px;top:355px;width:84px;height:31px;"><span class="bl">Reset Scenes</span></div>
<div class="btn" style="left:494px;top:392px;width:85px;height:31px;font-weight:bold;font-size:12px;line-height:13px;padding-top:2.5px"><span class="bl" style="transform:scaleX(0.96)">Start</span></div>
<div class="btn" style="left:494px;top:429px;width:85px;height:30px;font-weight:bold;font-size:12px;line-height:13px;color:#8a8a8a;text-shadow:none;padding-top:1.5px"><span class="bl" style="transform:scaleX(0.96)">Stop</span></div>
<div class="grp" style="left:583px;top:40px;width:430px;height:517px;border-left-color:transparent;box-shadow:1px 1px 0 #262626"></div>
<div class="grp" style="left:584px;top:59px;width:414px;height:310px;border-left-color:#323232;box-shadow:1px 1px 0 #262626"></div>
<div class="a" style="left:584px;top:47px;width:37px;height:12px;border:1px solid #3c3c3c;border-bottom:none;border-radius:2px 2px 0 0;background:#2e2e2e;font-size:7px;color:#cfcfcf;display:flex;align-items:center;justify-content:center;padding-bottom:1px;text-shadow:0 0 1px #000"><span class="bl" style="transform:scaleX(0.8)">APC Overlay</span></div>
<div class="a" style="left:621px;top:49px;width:22px;height:10px;border:1px solid #363636;border-bottom:none;border-radius:2px 2px 0 0;background:#2b2b2b;font-size:7px;font-weight:bold;color:#e0e0e0;display:flex;align-items:center;justify-content:center;text-shadow:0 0 1.5px #000,0 0 1px #000"><span class="bl" style="transform:scaleX(0.76)">Output</span></div>
<div class="a" style="left:643.5px;top:49px;width:44.5px;height:10px;border:1px solid #363636;border-bottom:none;border-radius:2px 2px 0 0;background:#2b2b2b;font-size:7px;font-weight:bold;color:#e0e0e0;display:flex;align-items:center;justify-content:center;text-shadow:0 0 1.5px #000,0 0 1px #000"><span class="bl" style="transform:scaleX(0.76)">Scannersettings</span></div>
<div class="a" style="left:689px;top:49px;width:24px;height:10px;border:1px solid #363636;border-bottom:none;border-radius:2px 2px 0 0;background:#2b2b2b;font-size:7px;font-weight:bold;color:#e0e0e0;display:flex;align-items:center;justify-content:center;text-shadow:0 0 1.5px #000,0 0 1px #000"><span class="bl" style="transform:scaleX(0.76)">Settings</span></div>
<div class="a" style="left:714px;top:49px;width:20.5px;height:10px;border:1px solid #363636;border-bottom:none;border-radius:2px 2px 0 0;background:#2b2b2b;font-size:7px;font-weight:bold;color:#e0e0e0;display:flex;align-items:center;justify-content:center;text-shadow:0 0 1.5px #000,0 0 1px #000"><span class="bl" style="transform:scaleX(0.76)">Artnet</span></div>
<div class="a" style="left:735.5px;top:49px;width:17.5px;height:10px;border:1px solid #363636;border-bottom:none;border-radius:2px 2px 0 0;background:#2b2b2b;font-size:7px;font-weight:bold;color:#e0e0e0;display:flex;align-items:center;justify-content:center;text-shadow:0 0 1.5px #000,0 0 1px #000"><span class="bl" style="transform:scaleX(0.76)">Fog</span></div>
<div class="a" style="left:590.5px;top:80px;width:1px;height:28px;background:repeating-linear-gradient(#6c6c6c 0 1px,transparent 1px 2px)"></div>
<div class="a" style="left:601.5px;top:79px;width:2px;height:30px;background:#1c1c1c"></div>
<div class="a" style="left:599.5px;top:77px;width:6px;height:6px;border-radius:45% 45% 50% 50%;box-shadow:0 0 0 0.7px #1a1a1a;background:radial-gradient(circle at 50% 25%,#b0b0b0 0,#8a8a8a 25%,#6a6a6a 60%,#4a4a4a)"></div>
<div class="a" style="left:590.5px;top:132px;width:1px;height:28px;background:repeating-linear-gradient(#6c6c6c 0 1px,transparent 1px 2px)"></div>
<div class="a" style="left:601.5px;top:131px;width:2px;height:30px;background:#1c1c1c"></div>
<div class="a" style="left:599.5px;top:129px;width:6px;height:6px;border-radius:45% 45% 50% 50%;box-shadow:0 0 0 0.7px #1a1a1a;background:radial-gradient(circle at 50% 25%,#b0b0b0 0,#8a8a8a 25%,#6a6a6a 60%,#4a4a4a)"></div>
<div class="btn" style="left:592px;top:170px;width:39px;height:24px;"><span class="bl">Free</span></div>
<div class="a" style="left:590.5px;top:216px;width:1px;height:28px;background:repeating-linear-gradient(#6c6c6c 0 1px,transparent 1px 2px)"></div>
<div class="a" style="left:601.5px;top:215px;width:2px;height:30px;background:#1c1c1c"></div>
<div class="a" style="left:599.5px;top:213px;width:6px;height:6px;border-radius:45% 45% 50% 50%;box-shadow:0 0 0 0.7px #1a1a1a;background:radial-gradient(circle at 50% 25%,#b0b0b0 0,#8a8a8a 25%,#6a6a6a 60%,#4a4a4a)"></div>
<div class="a" style="left:590.5px;top:270px;width:1px;height:34px;background:repeating-linear-gradient(#6c6c6c 0 1px,transparent 1px 2px)"></div>
<div class="a" style="left:601.5px;top:269px;width:2px;height:36px;background:#1c1c1c"></div>
<div class="a" style="left:599.5px;top:300px;width:6px;height:6px;border-radius:45% 45% 50% 50%;box-shadow:0 0 0 0.7px #1a1a1a;background:radial-gradient(circle at 50% 25%,#b0b0b0 0,#8a8a8a 25%,#6a6a6a 60%,#4a4a4a)"></div>
<div class="btn" style="left:592px;top:309px;width:52px;height:24px;line-height:7.5px"><span class="bl">MultiSel<br>Off</span></div>
<div class="btn" style="left:592px;top:339px;width:52px;height:22px;"><span class="bl">Free</span></div>
<div class="a" style="left:655.5px;top:80px;width:1px;height:28px;background:repeating-linear-gradient(#6c6c6c 0 1px,transparent 1px 2px)"></div>
<div class="a" style="left:666.5px;top:79px;width:2px;height:30px;background:#1c1c1c"></div>
<div class="a" style="left:664.5px;top:77px;width:6px;height:6px;border-radius:45% 45% 50% 50%;box-shadow:0 0 0 0.7px #1a1a1a;background:radial-gradient(circle at 50% 25%,#b0b0b0 0,#8a8a8a 25%,#6a6a6a 60%,#4a4a4a)"></div>
<div class="a" style="left:655.5px;top:132px;width:1px;height:28px;background:repeating-linear-gradient(#6c6c6c 0 1px,transparent 1px 2px)"></div>
<div class="a" style="left:666.5px;top:131px;width:2px;height:30px;background:#1c1c1c"></div>
<div class="a" style="left:664.5px;top:129px;width:6px;height:6px;border-radius:45% 45% 50% 50%;box-shadow:0 0 0 0.7px #1a1a1a;background:radial-gradient(circle at 50% 25%,#b0b0b0 0,#8a8a8a 25%,#6a6a6a 60%,#4a4a4a)"></div>
<div class="btn" style="left:657px;top:170px;width:39px;height:24px;"><span class="bl">Free</span></div>
<div class="a" style="left:655.5px;top:216px;width:1px;height:28px;background:repeating-linear-gradient(#6c6c6c 0 1px,transparent 1px 2px)"></div>
<div class="a" style="left:666.5px;top:215px;width:2px;height:30px;background:#1c1c1c"></div>
<div class="a" style="left:664.5px;top:213px;width:6px;height:6px;border-radius:45% 45% 50% 50%;box-shadow:0 0 0 0.7px #1a1a1a;background:radial-gradient(circle at 50% 25%,#b0b0b0 0,#8a8a8a 25%,#6a6a6a 60%,#4a4a4a)"></div>
<div class="a" style="left:655.5px;top:270px;width:1px;height:34px;background:repeating-linear-gradient(#6c6c6c 0 1px,transparent 1px 2px)"></div>
<div class="a" style="left:666.5px;top:269px;width:2px;height:36px;background:#1c1c1c"></div>
<div class="a" style="left:664.5px;top:300px;width:6px;height:6px;border-radius:45% 45% 50% 50%;box-shadow:0 0 0 0.7px #1a1a1a;background:radial-gradient(circle at 50% 25%,#b0b0b0 0,#8a8a8a 25%,#6a6a6a 60%,#4a4a4a)"></div>
<div class="btn" style="left:657px;top:309px;width:52px;height:24px;line-height:7.5px"><span class="bl">BeatMode</span></div>
<div class="btn" style="left:657px;top:339px;width:52px;height:22px;"><span class="bl">Free</span></div>
<div class="a" style="left:726.5px;top:80px;width:1px;height:28px;background:repeating-linear-gradient(#6c6c6c 0 1px,transparent 1px 2px)"></div>
<div class="a" style="left:737.5px;top:79px;width:2px;height:30px;background:#1c1c1c"></div>
<div class="a" style="left:735.5px;top:77px;width:6px;height:6px;border-radius:45% 45% 50% 50%;box-shadow:0 0 0 0.7px #1a1a1a;background:radial-gradient(circle at 50% 25%,#b0b0b0 0,#8a8a8a 25%,#6a6a6a 60%,#4a4a4a)"></div>
<div class="a" style="left:726.5px;top:132px;width:1px;height:28px;background:repeating-linear-gradient(#6c6c6c 0 1px,transparent 1px 2px)"></div>
<div class="a" style="left:737.5px;top:131px;width:2px;height:30px;background:#1c1c1c"></div>
<div class="a" style="left:735.5px;top:129px;width:6px;height:6px;border-radius:45% 45% 50% 50%;box-shadow:0 0 0 0.7px #1a1a1a;background:radial-gradient(circle at 50% 25%,#b0b0b0 0,#8a8a8a 25%,#6a6a6a 60%,#4a4a4a)"></div>
<div class="btn" style="left:728px;top:170px;width:39px;height:24px;"><span class="bl">Free</span></div>
<div class="a" style="left:726.5px;top:216px;width:1px;height:28px;background:repeating-linear-gradient(#6c6c6c 0 1px,transparent 1px 2px)"></div>
<div class="a" style="left:737.5px;top:215px;width:2px;height:30px;background:#1c1c1c"></div>
<div class="a" style="left:735.5px;top:213px;width:6px;height:6px;border-radius:45% 45% 50% 50%;box-shadow:0 0 0 0.7px #1a1a1a;background:radial-gradient(circle at 50% 25%,#b0b0b0 0,#8a8a8a 25%,#6a6a6a 60%,#4a4a4a)"></div>
<div class="a" style="left:726.5px;top:270px;width:1px;height:34px;background:repeating-linear-gradient(#6c6c6c 0 1px,transparent 1px 2px)"></div>
<div class="a" style="left:737.5px;top:269px;width:2px;height:36px;background:#1c1c1c"></div>
<div class="a" style="left:735.5px;top:300px;width:6px;height:6px;border-radius:45% 45% 50% 50%;box-shadow:0 0 0 0.7px #1a1a1a;background:radial-gradient(circle at 50% 25%,#b0b0b0 0,#8a8a8a 25%,#6a6a6a 60%,#4a4a4a)"></div>
<div class="btn" style="left:728px;top:309px;width:52px;height:24px;line-height:7.5px"><span class="bl">Loop</span></div>
<div class="btn" style="left:728px;top:339px;width:52px;height:22px;"><span class="bl">Free</span></div>
<div class="a" style="left:791.5px;top:80px;width:1px;height:28px;background:repeating-linear-gradient(#6c6c6c 0 1px,transparent 1px 2px)"></div>
<div class="a" style="left:802.5px;top:79px;width:2px;height:30px;background:#1c1c1c"></div>
<div class="a" style="left:800.5px;top:77px;width:6px;height:6px;border-radius:45% 45% 50% 50%;box-shadow:0 0 0 0.7px #1a1a1a;background:radial-gradient(circle at 50% 25%,#b0b0b0 0,#8a8a8a 25%,#6a6a6a 60%,#4a4a4a)"></div>
<div class="a" style="left:791.5px;top:132px;width:1px;height:28px;background:repeating-linear-gradient(#6c6c6c 0 1px,transparent 1px 2px)"></div>
<div class="a" style="left:802.5px;top:131px;width:2px;height:30px;background:#1c1c1c"></div>
<div class="a" style="left:800.5px;top:129px;width:6px;height:6px;border-radius:45% 45% 50% 50%;box-shadow:0 0 0 0.7px #1a1a1a;background:radial-gradient(circle at 50% 25%,#b0b0b0 0,#8a8a8a 25%,#6a6a6a 60%,#4a4a4a)"></div>
<div class="btn" style="left:793px;top:170px;width:39px;height:24px;"><span class="bl">Free</span></div>
<div class="a" style="left:791.5px;top:216px;width:1px;height:28px;background:repeating-linear-gradient(#6c6c6c 0 1px,transparent 1px 2px)"></div>
<div class="a" style="left:802.5px;top:215px;width:2px;height:30px;background:#1c1c1c"></div>
<div class="a" style="left:800.5px;top:240px;width:6px;height:6px;border-radius:45% 45% 50% 50%;box-shadow:0 0 0 0.7px #1a1a1a;background:radial-gradient(circle at 50% 25%,#b0b0b0 0,#8a8a8a 25%,#6a6a6a 60%,#4a4a4a)"></div>
<div class="a" style="left:791.5px;top:270px;width:1px;height:34px;background:repeating-linear-gradient(#6c6c6c 0 1px,transparent 1px 2px)"></div>
<div class="a" style="left:802.5px;top:269px;width:2px;height:36px;background:#1c1c1c"></div>
<div class="a" style="left:800.5px;top:300px;width:6px;height:6px;border-radius:45% 45% 50% 50%;box-shadow:0 0 0 0.7px #1a1a1a;background:radial-gradient(circle at 50% 25%,#b0b0b0 0,#8a8a8a 25%,#6a6a6a 60%,#4a4a4a)"></div>
<div class="btn" style="left:793px;top:309px;width:52px;height:24px;line-height:7.5px"><span class="bl" style="transform:scaleX(0.71)">Flash2Black</span></div>
<div class="btn" style="left:793px;top:339px;width:52px;height:22px;"><span class="bl">Freeze</span></div>
<div class="grp" style="left:852px;top:72px;width:136px;height:286px;"></div>
<div class="grp" style="left:858px;top:84px;width:123px;height:38px;"></div>
<div class="a" style="left:861.5px;top:92.7px;width:7px;height:7px;border-radius:50%;background:#1f1f1f;box-shadow:0 0.8px 0 #3c3c3c,0 -0.5px 0 #222"></div>
<div class="a" style="left:862.7px;top:93.9px;width:4.6px;height:4.6px;border-radius:50%;background:radial-gradient(circle at 50% 30%,#b8b8b8,#808080 60%,#606060)"></div>
<div class="a" style="left:861.5px;top:108.5px;width:7px;height:7px;border-radius:50%;background:#1f1f1f;box-shadow:0 0.8px 0 #3c3c3c,0 -0.5px 0 #222"></div>
<div class="btn" style="left:858px;top:126px;width:46px;height:31px;"><span class="bl">Tap BPM</span></div>
<div class="a" style="left:919px;top:128px;width:58px;height:30px;border:1px solid #3a3a3a;border-radius:2px;font-size:11px;color:#ececec;display:flex;align-items:center;justify-content:center;text-shadow:0 0 1.5px #000,0 0 1px #000;-webkit-text-stroke:0.2px #ececec"><span class="bl" style="transform:scaleX(0.92)">126,00</span></div>
<div class="btn" style="left:919px;top:163px;width:26px;height:18px;font-size:11px;line-height:11px"><span class="bl" style="transform:scaleX(1)">-</span></div>
<div class="btn" style="left:951px;top:163px;width:26px;height:18px;font-size:11px;line-height:11px"><span class="bl" style="transform:scaleX(1)">+</span></div>
<div class="grp" style="left:858px;top:193px;width:123px;height:69px;"></div>
<div class="a" style="left:865.3px;top:200.3px;width:7px;height:7px;border-radius:50%;background:#1f1f1f;box-shadow:0 0.8px 0 #3c3c3c,0 -0.5px 0 #222"></div>
<div class="a" style="left:866.5px;top:201.5px;width:4.6px;height:4.6px;border-radius:50%;background:radial-gradient(circle at 50% 30%,#b8b8b8,#808080 60%,#606060)"></div>
<div class="a" style="left:865.3px;top:212.5px;width:7px;height:7px;border-radius:50%;background:#1f1f1f;box-shadow:0 0.8px 0 #3c3c3c,0 -0.5px 0 #222"></div>
<div class="a" style="left:865.3px;top:224.70000000000002px;width:7px;height:7px;border-radius:50%;background:#1f1f1f;box-shadow:0 0.8px 0 #3c3c3c,0 -0.5px 0 #222"></div>
<div class="a" style="left:865.3px;top:236.9px;width:7px;height:7px;border-radius:50%;background:#1f1f1f;box-shadow:0 0.8px 0 #3c3c3c,0 -0.5px 0 #222"></div>
<div class="a" style="left:865.3px;top:249.10000000000002px;width:7px;height:7px;border-radius:50%;background:#1f1f1f;box-shadow:0 0.8px 0 #3c3c3c,0 -0.5px 0 #222"></div>
<div class="a" style="left:859.5px;top:279px;width:6.5px;height:6.5px;background:#1c1c1c;box-shadow:0 0.8px 0 #3a3a3a"></div>
<div class="btn" style="left:858px;top:307px;width:46px;height:42px;font-size:10.5px;line-height:11px;font-weight:normal"><span class="bl" style="transform:scaleX(0.82)">Fog now</span></div>
<div class="btn" style="left:930px;top:307px;width:45px;height:42px;font-size:10.5px;line-height:9.5px;font-weight:normal"><span class="bl" style="transform:scaleX(0.82)">Fog<br>On/Off</span></div>
<div class="grp" style="left:590px;top:373px;width:417px;height:182px;"></div>
<div class="a" style="left:603px;top:387px;width:397px;height:158px;background:#000"></div>
<svg class="a" style="left:0;top:0" width="1024" height="573"><defs>
<linearGradient id="gblue" gradientUnits="userSpaceOnUse" x1="6" y1="0" x2="41" y2="0"><stop offset="0" stop-color="#2020f0"/><stop offset="0.5" stop-color="#101060"/><stop offset="1" stop-color="#2020f0"/></linearGradient>
<linearGradient id="gred" x1="0" x2="1"><stop offset="0" stop-color="#e8b8c0"/><stop offset="0.35" stop-color="#d03030"/><stop offset="0.7" stop-color="#d03030"/><stop offset="1" stop-color="#e0a0a8"/></linearGradient>
<linearGradient id="gwb" x1="0" x2="1"><stop offset="0" stop-color="#e0e0e0"/><stop offset="0.5" stop-color="#8080e0"/><stop offset="1" stop-color="#2020e8"/></linearGradient>
<linearGradient id="gv" gradientUnits="userSpaceOnUse" x1="0" y1="0" x2="0" y2="47"><stop offset="0" stop-color="#d0d0e0"/><stop offset="1" stop-color="#2020f0"/></linearGradient>
<linearGradient id="grain" gradientUnits="userSpaceOnUse" x1="2" y1="2" x2="45" y2="45"><stop offset="0" stop-color="#20c0e0"/><stop offset="0.25" stop-color="#e0e020"/><stop offset="0.5" stop-color="#e020e0"/><stop offset="0.75" stop-color="#e04020"/><stop offset="1" stop-color="#20c0e0"/></linearGradient>
<linearGradient id="grain2" gradientUnits="userSpaceOnUse" x1="45" y1="2" x2="2" y2="45"><stop offset="0" stop-color="#20c0e0"/><stop offset="0.25" stop-color="#20e020"/><stop offset="0.5" stop-color="#e020e0"/><stop offset="0.75" stop-color="#e0e020"/><stop offset="1" stop-color="#20c0e0"/></linearGradient>
<linearGradient id="gbl" gradientUnits="userSpaceOnUse" x1="1" y1="2" x2="41" y2="11"><stop offset="0" stop-color="#3050f0"/><stop offset="1" stop-color="#101050"/></linearGradient>
<linearGradient id="gwv" x1="0" x2="1"><stop offset="0" stop-color="#2030e8"/><stop offset="0.5" stop-color="#a090e0"/><stop offset="1" stop-color="#2030e8"/></linearGradient>
<linearGradient id="gsemi" x1="0" x2="1"><stop offset="0" stop-color="#a020e0"/><stop offset="0.3" stop-color="#e09020"/><stop offset="0.5" stop-color="#d03020"/><stop offset="0.7" stop-color="#e09020"/><stop offset="1" stop-color="#a020e0"/></linearGradient>
<linearGradient id="hxa0" gradientUnits="userSpaceOnUse" x1="23.5" y1="0.9" x2="43" y2="12.6"><stop offset="0" stop-color="#c020c0" stop-opacity="0.35"/><stop offset="0.85" stop-color="#c020c0"/><stop offset="1" stop-color="#e8e8e8"/></linearGradient><linearGradient id="hxa1" gradientUnits="userSpaceOnUse" x1="43" y1="12.6" x2="43" y2="35"><stop offset="0" stop-color="#30c030" stop-opacity="0.35"/><stop offset="0.85" stop-color="#30c030"/><stop offset="1" stop-color="#e8e8e8"/></linearGradient><linearGradient id="hxa2" gradientUnits="userSpaceOnUse" x1="43" y1="35" x2="23.5" y2="46.3"><stop offset="0" stop-color="#c020c0" stop-opacity="0.35"/><stop offset="0.85" stop-color="#c020c0"/><stop offset="1" stop-color="#e8e8e8"/></linearGradient><linearGradient id="hxa3" gradientUnits="userSpaceOnUse" x1="23.5" y1="46.3" x2="4.2" y2="35"><stop offset="0" stop-color="#30c030" stop-opacity="0.35"/><stop offset="0.85" stop-color="#30c030"/><stop offset="1" stop-color="#e8e8e8"/></linearGradient><linearGradient id="hxa4" gradientUnits="userSpaceOnUse" x1="4.2" y1="35" x2="4.2" y2="12.6"><stop offset="0" stop-color="#c020c0" stop-opacity="0.35"/><stop offset="0.85" stop-color="#c020c0"/><stop offset="1" stop-color="#e8e8e8"/></linearGradient><linearGradient id="hxa5" gradientUnits="userSpaceOnUse" x1="4.2" y1="12.6" x2="23.5" y2="0.9"><stop offset="0" stop-color="#30c030" stop-opacity="0.35"/><stop offset="0.85" stop-color="#30c030"/><stop offset="1" stop-color="#e8e8e8"/></linearGradient><linearGradient id="hxb0" gradientUnits="userSpaceOnUse" x1="23.5" y1="0.9" x2="43" y2="12.6"><stop offset="0" stop-color="#e01818" stop-opacity="0.35"/><stop offset="0.85" stop-color="#e01818"/><stop offset="1" stop-color="#e8e8e8"/></linearGradient><linearGradient id="hxb1" gradientUnits="userSpaceOnUse" x1="43" y1="12.6" x2="43" y2="35"><stop offset="0" stop-color="#d0d0d0" stop-opacity="0.35"/><stop offset="0.85" stop-color="#d0d0d0"/><stop offset="1" stop-color="#e8e8e8"/></linearGradient><linearGradient id="hxb2" gradientUnits="userSpaceOnUse" x1="43" y1="35" x2="23.5" y2="46.3"><stop offset="0" stop-color="#e01818" stop-opacity="0.35"/><stop offset="0.85" stop-color="#e01818"/><stop offset="1" stop-color="#e8e8e8"/></linearGradient><linearGradient id="hxb3" gradientUnits="userSpaceOnUse" x1="23.5" y1="46.3" x2="4.2" y2="35"><stop offset="0" stop-color="#d0d0d0" stop-opacity="0.35"/><stop offset="0.85" stop-color="#d0d0d0"/><stop offset="1" stop-color="#e8e8e8"/></linearGradient><linearGradient id="hxb4" gradientUnits="userSpaceOnUse" x1="4.2" y1="35" x2="4.2" y2="12.6"><stop offset="0" stop-color="#e01818" stop-opacity="0.35"/><stop offset="0.85" stop-color="#e01818"/><stop offset="1" stop-color="#e8e8e8"/></linearGradient><linearGradient id="hxb5" gradientUnits="userSpaceOnUse" x1="4.2" y1="12.6" x2="23.5" y2="0.9"><stop offset="0" stop-color="#d0d0d0" stop-opacity="0.35"/><stop offset="0.85" stop-color="#d0d0d0"/><stop offset="1" stop-color="#e8e8e8"/></linearGradient><linearGradient id="gyl" gradientUnits="userSpaceOnUse" x1="1" y1="0" x2="46" y2="0"><stop offset="0" stop-color="#e0b020"/><stop offset="0.5" stop-color="#b04010"/><stop offset="1" stop-color="#e0d020"/></linearGradient>
</defs><path d="M858.92,478.57 A59,59 0 0 1 820.32,520.92" stroke="#d87010" stroke-width="1.6" fill="none" /><path d="M820.32,520.92 A59,59 0 0 1 766.57,512.55" stroke="#c83070" stroke-width="1.6" fill="none" /><path d="M766.57,512.55 A59,59 0 0 1 742.85,458.63" stroke="#1828d8" stroke-width="1.6" fill="none" /><path d="M742.85,458.63 A59,59 0 0 1 776.19,411.70" stroke="#d81818" stroke-width="1.6" fill="none" /><path d="M776.19,411.70 A59,59 0 0 1 834.92,416.38" stroke="#18b818" stroke-width="1.6" fill="none" /><path d="M834.92,416.38 A59,59 0 0 1 858.92,478.57" stroke="#1828d8" stroke-width="1.6" fill="none" /></svg>
<div class="t" style="left:7px;top:1.7px;font-size:7px;color:#e0e0e0;transform:scaleX(0.836)">Showcontriller Live 2018 V0.95 Build 3.7.2018 - Device In: APC MINI&nbsp; Device Out: APC MINI</div>
<div class="t" style="left:4px;top:14px;">File</div>
<div class="t" style="left:21px;top:14px;">Edit</div>
<div class="t" style="left:39px;top:14px;">View</div>
<div class="t" style="left:60px;top:14px;">Info</div>
<div class="t gl" style="left:9px;top:36.5px;">Scenes</div>
<div class="t gl" style="left:10px;top:332.8px;">Recolour</div>
<div class="t gl" style="left:9px;top:394px;">Group of Scenes</div>
<div class="t gl" style="left:11px;top:461px;">Fader</div>
<div class="t" style="left:20px;top:470px;">Strobe</div>
<div class="tc" style="left:14px;top:544.5px;width:40px;font-size:8.5px;line-height:9px"><span class="bl" style="transform:scaleX(0.72)">0</span></div>
<div class="t" style="left:77px;top:470px;">Color</div>
<div class="tc" style="left:74.5px;top:544.5px;width:40px;font-size:8.5px;line-height:9px"><span class="bl" style="transform:scaleX(0.72)">0</span></div>
<div class="t" style="left:135px;top:470px;">SizeXY</div>
<div class="tc" style="left:125px;top:544.5px;width:40px;font-size:8.5px;line-height:9px"><span class="bl" style="transform:scaleX(0.72)">255</span></div>
<div class="t" style="left:190.8px;top:470px;">Size X</div>
<div class="tc" style="left:181px;top:544.5px;width:40px;font-size:8.5px;line-height:9px"><span class="bl" style="transform:scaleX(0.72)">255</span></div>
<div class="t" style="left:248.4px;top:470px;">Size Y</div>
<div class="tc" style="left:240px;top:544.5px;width:40px;font-size:8.5px;line-height:9px"><span class="bl" style="transform:scaleX(0.72)">255</span></div>
<div class="t" style="left:306px;top:470px;">Shift X</div>
<div class="tc" style="left:303.3px;top:544.5px;width:40px;font-size:8.5px;line-height:9px"><span class="bl" style="transform:scaleX(0.72)">128</span></div>
<div class="t" style="left:365.5px;top:470px;">Shift Y</div>
<div class="tc" style="left:360.5px;top:544.5px;width:40px;font-size:8.5px;line-height:9px"><span class="bl" style="transform:scaleX(0.72)">128</span></div>
<div class="t" style="left:419.8px;top:470px;">Speed</div>
<div class="tc" style="left:414.8px;top:544.5px;width:40px;font-size:8.5px;line-height:9px"><span class="bl" style="transform:scaleX(0.72)">0</span></div>
<div class="t" style="left:513.7px;top:470px;transform:scaleX(0.68)">Master Int.</div>
<div class="tc" style="left:502px;top:544.5px;width:40px;font-size:8.5px;line-height:9px"><span class="bl" style="transform:scaleX(0.72)">255</span></div>
<div class="t gl" style="left:496px;top:37px;">Bank</div>
<div class="t" style="left:527.5px;top:325.5px;font-size:10px;line-height:11px;transform:none;font-weight:bold">1</div>
<div class="t gl" style="left:586px;top:37px;">Ext. Controls</div>
<div class="t" style="left:591px;top:62px;">Zoom 1</div>
<div class="t" style="left:591px;top:114px;">Intensity 1</div>
<div class="t" style="left:591px;top:198px;">Value Red</div>
<div class="t" style="left:591px;top:253px;">Rotate X</div>
<div class="t" style="left:656px;top:62px;">Zoom 2</div>
<div class="t" style="left:656px;top:114px;">Intensity 2</div>
<div class="t" style="left:656px;top:198px;">Value Green</div>
<div class="t" style="left:656px;top:253px;">Rotate Y</div>
<div class="t" style="left:727px;top:62px;">Zoom 3</div>
<div class="t" style="left:727px;top:114px;">Intensity 3</div>
<div class="t" style="left:727px;top:198px;">Value Blue</div>
<div class="t" style="left:727px;top:253px;">Rotate Z</div>
<div class="t" style="left:792px;top:62px;">Zoom 4</div>
<div class="t" style="left:792px;top:114px;">Intensity 4</div>
<div class="t" style="left:792px;top:198px;">Recolourindex</div>
<div class="t" style="left:792px;top:253px;">Chaserspeed</div>
<div class="t gl" style="left:854px;top:68px;">Controls</div>
<div class="t gl" style="left:861px;top:80px;">Timing</div>
<div class="t" style="left:870px;top:92.5px;">BPM</div>
<div class="t" style="left:870px;top:108px;">Speedfader</div>
<div class="t gl" style="left:861px;top:188.5px;">Switch every..</div>
<div class="t" style="left:874px;top:200.0px;">Every Beat</div>
<div class="t" style="left:874px;top:212.2px;">2 Beats</div>
<div class="t" style="left:874px;top:224.4px;">4 Beats</div>
<div class="t" style="left:874px;top:236.6px;">8 Beats</div>
<div class="t" style="left:874px;top:248.8px;">16 Beats</div>
<div class="t" style="left:869px;top:277.5px;transform:scaleX(0.7)">Enable Fog Machines</div>
<div class="t gl" style="left:593px;top:370px;">Preview</div></body></html>
